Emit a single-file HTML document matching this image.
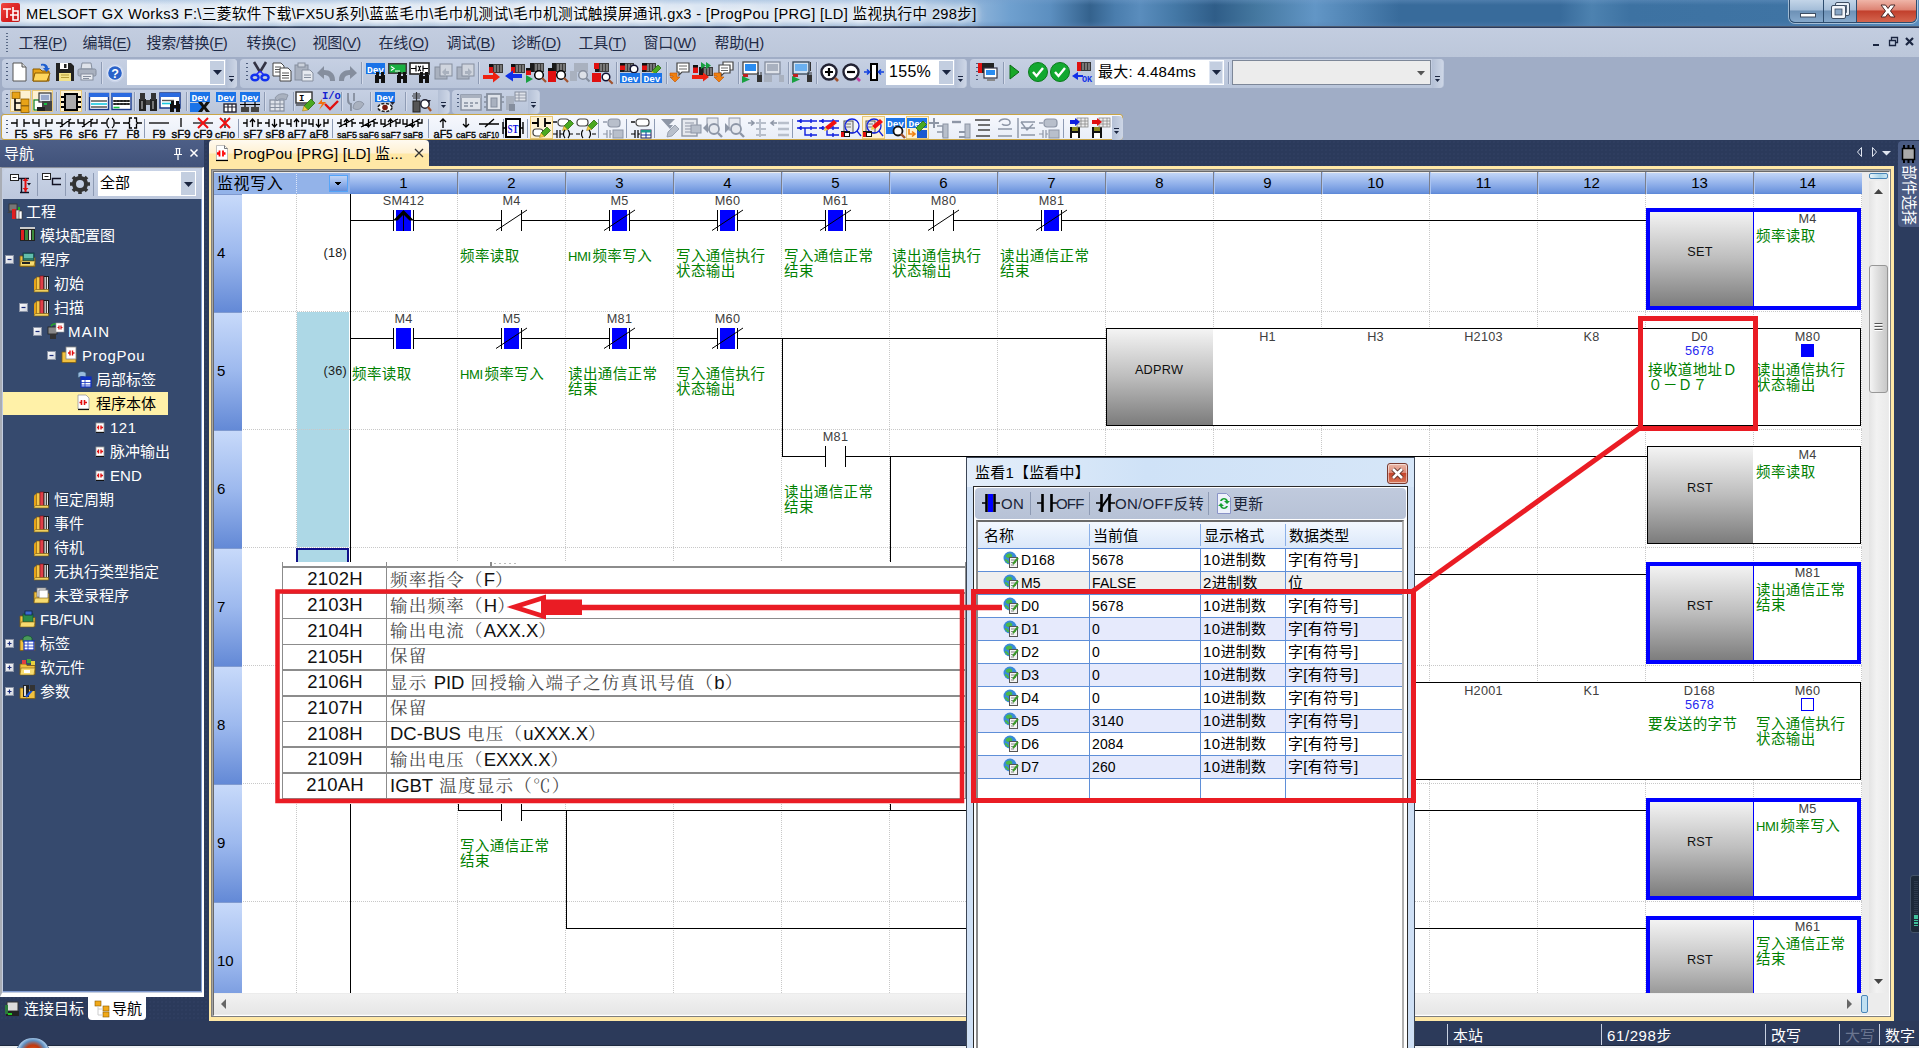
<!DOCTYPE html>
<html lang="zh-CN"><head><meta charset="utf-8"><title>MELSOFT GX Works3</title>
<style>
html,body{margin:0;padding:0}
body{width:1919px;height:1048px;position:relative;overflow:hidden;background:#2b3a5b radial-gradient(#31406399 .7px,transparent 1.100px) 0 0/4px 4px;font-family:"Liberation Sans","Noto Sans CJK SC",sans-serif;font-size:15px;color:#000}
.abs{position:absolute}
div,span{box-sizing:border-box}
.t{position:absolute;white-space:nowrap;line-height:1}
.mi{font-size:15px;color:#1f2b47;letter-spacing:-.3px}
.mi u{text-decoration:underline;text-underline-offset:2px}
.tbp{background:linear-gradient(#c6d0e3,#b9c5da);border-radius:4px}
.tv{font-size:15px}
.cm{font-family:"Liberation Sans","Noto Sans CJK SC",sans-serif;font-size:14.500px;fill:#008000;letter-spacing:.4px}
.ov1{font-size:18.500px;text-align:center;color:#111;letter-spacing:.2px}
.ov2{font-size:17.500px;color:#4a4a4a;font-family:"Liberation Sans","Noto Serif CJK SC",serif;letter-spacing:1.25px;font-weight:400}
.ov2 b{font-weight:normal;color:#111;font-size:18.500px;letter-spacing:0}
.st{font-size:15px}
.wt{font-size:15px;color:#000;letter-spacing:0}
.wl{font-size:14px;padding-top:.5px;letter-spacing:.1px}
.wm{letter-spacing:.35px}

</style></head>
<body>
<!-- title -->

<div id="title" class="abs" style="left:0;top:0;width:1919px;height:27px;background:
linear-gradient(180deg,rgba(120,160,205,.35) 0,rgba(255,255,255,0) 5px,rgba(255,255,255,0) 21px,rgba(90,130,180,.35) 26px),
linear-gradient(90deg,#dde8f4 0,#dbe6f3 700px,#d0dff0 860px,#b4cce6 930px,#8fb4da 975px,#6fa0cf 1010px,#5c8fc0 1050px,#34628d 1090px,#4a7dad 1115px,#5a8dbd 1140px,#4478a6 1175px,#2f5d88 1215px,#44779f 1255px,#6296c6 1315px,#4c80b0 1360px,#386b9b 1400px,#386b9b 1560px,#4d82b0 1592px,#3d72a2 1630px,#3f74a4 1790px,#5a8fbf 1919px);border-bottom:1px solid #4b5a70">
 <div class="abs" style="left:1px;top:3px;width:19px;height:19px;background:linear-gradient(135deg,#f0473f,#d81f1f 60%,#b81414);border-radius:2px;overflow:hidden">
  <svg width="19" height="19" viewBox="0 0 19 19"><path d="M2 6h8M6 6v9M9 12h3M12 4v4M12 8h5v9h-5z M12 12h5" stroke="#fff" stroke-width="1.6" fill="none"/></svg>
 </div>
 <div class="t" id="ttl" style="left:26px;top:6.500px;font-size:14.67px;color:#000;letter-spacing:.33px;text-shadow:0 0 6px #fff,0 0 10px #fff,0 0 14px #fff">MELSOFT GX Works3 F:\三菱软件下载\FX5U系列\蓝蓝毛巾\毛巾机测试\毛巾机测试触摸屏通讯.gx3 - [ProgPou [PRG] [LD] 监视执行中 298步]</div>
 <div class="abs" style="left:1789px;top:0;width:128px;height:23px;border:1px solid #2d4c6e;border-top:none;border-radius:0 0 6px 6px;overflow:hidden;box-shadow:0 0 0 1px rgba(255,255,255,.5)">
   <div class="abs" style="left:0;top:0;width:34px;height:22px;background:linear-gradient(#c3d5e8 0,#a4bdd8 45%,#6d91b6 50%,#86a9cc 100%);border-right:1px solid #2d4c6e"></div>
   <div class="abs" style="left:34px;top:0;width:33px;height:22px;background:linear-gradient(#c3d5e8 0,#a4bdd8 45%,#6d91b6 50%,#86a9cc 100%);border-right:1px solid #2d4c6e"></div>
   <div class="abs" style="left:67px;top:0;width:61px;height:22px;background:linear-gradient(#efb5a8 0,#dd8373 45%,#c23f2c 50%,#d4654e 100%)"></div>
   <svg class="abs" style="left:0;top:0" width="128" height="22" viewBox="0 0 128 22">
     <rect x="10.500" y="13.500" width="15" height="3.500" fill="#fff" stroke="#3d4d62"/>
     <rect x="45.500" y="2.500" width="14" height="13" rx="1.500" fill="#e8eef6" stroke="#3d4d62"/><rect x="48.500" y="5.500" width="8" height="7" fill="#9ab4d0" stroke="#3d4d62" stroke-width=".8"/>
     <rect x="41.500" y="5.500" width="14" height="13" rx="1.500" fill="#f2f5fa" stroke="#3d4d62"/><rect x="45" y="9" width="7" height="6" fill="#88a6c6" stroke="#3d4d62" stroke-width=".8"/>
     <path d="M91 5h4.500l2.500 3.500 2.500-3.500h4.500l-4.500 6 4.500 6h-4.500l-2.500-3.500-2.500 3.500h-4.500l4.500-6z" fill="#fff" stroke="#4a2a2a" stroke-width="1"/>
   </svg>
 </div>
</div>

<!-- menu -->
<div id="menu" class="abs" style="left:0;top:28px;width:1919px;height:29px;background:linear-gradient(#c3cde0,#bcc7da)"><div class="abs" style="left:6px;top:5px;width:2px;height:19px;background:repeating-linear-gradient(#5a6a86 0,#5a6a86 1px,transparent 1px,transparent 3px)"></div><div class="t mi" style="left:18.5px;top:7px">工程(<u>P</u>)</div><div class="t mi" style="left:82.5px;top:7px">编辑(<u>E</u>)</div><div class="t mi" style="left:146.5px;top:7px">搜索/替换(<u>F</u>)</div><div class="t mi" style="left:246.5px;top:7px">转换(<u>C</u>)</div><div class="t mi" style="left:312.5px;top:7px">视图(<u>V</u>)</div><div class="t mi" style="left:378.5px;top:7px">在线(<u>O</u>)</div><div class="t mi" style="left:446.5px;top:7px">调试(<u>B</u>)</div><div class="t mi" style="left:511.5px;top:7px">诊断(<u>D</u>)</div><div class="t mi" style="left:578.5px;top:7px">工具(<u>T</u>)</div><div class="t mi" style="left:643.5px;top:7px">窗口(<u>W</u>)</div><div class="t mi" style="left:714.5px;top:7px">帮助(<u>H</u>)</div><svg class="abs" style="left:1869px;top:6px" width="50" height="16" viewBox="0 0 50 16">
<rect x="4" y="10" width="6" height="2" fill="#1a2540"/>
<path d="M20.500 6.500h6v5h-6z M22.500 6v-2.500h6v5H27" fill="none" stroke="#1a2540" stroke-width="1.300"/>
<path d="M37 4l7 7M44 4l-7 7" stroke="#1a2540" stroke-width="2.200"/></svg></div>
<!-- toolbars -->
<div id="tbarea" class="abs" style="left:0;top:57px;width:1919px;height:83px;background:#a0adc6"></div><div class="abs tbp" style="left:2px;top:59px;width:235px;height:29px;"></div><div class="abs tbp" style="left:240px;top:59px;width:727px;height:29px;"></div><div class="abs tbp" style="left:970px;top:59px;width:474px;height:29px;"></div><div class="abs tbp" style="left:2px;top:90px;width:448px;height:24px;"></div><div class="abs tbp" style="left:452px;top:90px;width:88px;height:24px;"></div><div class="abs" style="left:1px;top:114px;width:1122px;height:26px;background:linear-gradient(#f6f8fd,#e9eef8);border:1px solid #c9a545;border-radius:3px"></div><div class="abs" style="left:226px;top:59px;width:11px;height:29px;background:linear-gradient(90deg,#b4c0d6,#cdd6e6);border-radius:0 4px 4px 0"></div><div class="abs" style="left:955px;top:59px;width:11px;height:29px;background:linear-gradient(90deg,#b4c0d6,#cdd6e6);border-radius:0 4px 4px 0"></div><div class="abs" style="left:1432px;top:59px;width:11px;height:29px;background:linear-gradient(90deg,#b4c0d6,#cdd6e6);border-radius:0 4px 4px 0"></div><div class="abs" style="left:438px;top:90px;width:11px;height:24px;background:linear-gradient(90deg,#b4c0d6,#cdd6e6);border-radius:0 4px 4px 0"></div><div class="abs" style="left:528px;top:90px;width:11px;height:24px;background:linear-gradient(90deg,#b4c0d6,#cdd6e6);border-radius:0 4px 4px 0"></div><div class="abs" style="left:1112px;top:116px;width:11px;height:24px;background:linear-gradient(90deg,#b4c0d6,#cdd6e6);border-radius:0 4px 4px 0"></div><div class="abs" style="left:10px;top:90px;width:21px;height:22px;background:#fdf1d2;border:1px solid #e8c877"></div><div class="abs" style="left:32px;top:90px;width:21px;height:22px;background:#fdf1d2;border:1px solid #e8c877"></div><div class="abs" style="left:60px;top:90px;width:22px;height:22px;background:#fdf1d2;border:1px solid #e8c877"></div><div class="abs" style="left:127px;top:60px;width:98px;height:25px;background:#fff"></div><div class="abs" style="left:210px;top:61px;width:14px;height:23px;background:#c3cee0"></div><div class="abs" style="left:886px;top:60px;width:68px;height:25px;background:#fff"></div><div class="abs" style="left:939px;top:61px;width:14px;height:23px;background:#c3cee0"></div><div class="t" style="left:889px;top:64px;font-size:16px;letter-spacing:.3px">155%</div><div class="abs" style="left:1095px;top:60px;width:129px;height:25px;background:#fff"></div><div class="abs" style="left:1209px;top:61px;width:14px;height:23px;background:#c3cee0;border:1px solid #dfe6f2"></div><div class="t" style="left:1098px;top:64px;font-size:15px;letter-spacing:.2px">最大: 4.484ms</div><div class="abs" style="left:1232px;top:60px;width:199px;height:25px;background:#ececec;border:1px solid #7d8798"></div><div class="abs" style="left:6px;top:63px;width:2px;height:20px;background:repeating-linear-gradient(#4d5d7c 0,#4d5d7c 1.500px,transparent 1.500px,transparent 4px)"></div><div class="abs" style="left:246px;top:63px;width:2px;height:20px;background:repeating-linear-gradient(#4d5d7c 0,#4d5d7c 1.500px,transparent 1.500px,transparent 4px)"></div><div class="abs" style="left:976px;top:63px;width:2px;height:20px;background:repeating-linear-gradient(#4d5d7c 0,#4d5d7c 1.500px,transparent 1.500px,transparent 4px)"></div><div class="abs" style="left:6px;top:94px;width:2px;height:16px;background:repeating-linear-gradient(#4d5d7c 0,#4d5d7c 1.500px,transparent 1.500px,transparent 4px)"></div><div class="abs" style="left:457px;top:94px;width:2px;height:16px;background:repeating-linear-gradient(#4d5d7c 0,#4d5d7c 1.500px,transparent 1.500px,transparent 4px)"></div><div class="abs" style="left:6px;top:120px;width:2px;height:16px;background:repeating-linear-gradient(#4d5d7c 0,#4d5d7c 1.500px,transparent 1.500px,transparent 4px)"></div><div class="abs" style="left:101px;top:62px;width:1px;height:22px;background:#8e9bb4;box-shadow:1px 0 0 #d5dceb"></div><div class="abs" style="left:361px;top:62px;width:1px;height:22px;background:#8e9bb4;box-shadow:1px 0 0 #d5dceb"></div><div class="abs" style="left:478px;top:62px;width:1px;height:22px;background:#8e9bb4;box-shadow:1px 0 0 #d5dceb"></div><div class="abs" style="left:616px;top:62px;width:1px;height:22px;background:#8e9bb4;box-shadow:1px 0 0 #d5dceb"></div><div class="abs" style="left:666px;top:62px;width:1px;height:22px;background:#8e9bb4;box-shadow:1px 0 0 #d5dceb"></div><div class="abs" style="left:738px;top:62px;width:1px;height:22px;background:#8e9bb4;box-shadow:1px 0 0 #d5dceb"></div><div class="abs" style="left:788px;top:62px;width:1px;height:22px;background:#8e9bb4;box-shadow:1px 0 0 #d5dceb"></div><div class="abs" style="left:816px;top:62px;width:1px;height:22px;background:#8e9bb4;box-shadow:1px 0 0 #d5dceb"></div><div class="abs" style="left:1003px;top:62px;width:1px;height:22px;background:#8e9bb4;box-shadow:1px 0 0 #d5dceb"></div><div class="abs" style="left:1228px;top:62px;width:1px;height:22px;background:#8e9bb4;box-shadow:1px 0 0 #d5dceb"></div><div class="abs" style="left:56px;top:92px;width:1px;height:19px;background:#8e9bb4;box-shadow:1px 0 0 #d5dceb"></div><div class="abs" style="left:85px;top:92px;width:1px;height:19px;background:#8e9bb4;box-shadow:1px 0 0 #d5dceb"></div><div class="abs" style="left:134px;top:92px;width:1px;height:19px;background:#8e9bb4;box-shadow:1px 0 0 #d5dceb"></div><div class="abs" style="left:186px;top:92px;width:1px;height:19px;background:#8e9bb4;box-shadow:1px 0 0 #d5dceb"></div><div class="abs" style="left:264px;top:92px;width:1px;height:19px;background:#8e9bb4;box-shadow:1px 0 0 #d5dceb"></div><div class="abs" style="left:293px;top:92px;width:1px;height:19px;background:#8e9bb4;box-shadow:1px 0 0 #d5dceb"></div><div class="abs" style="left:341px;top:92px;width:1px;height:19px;background:#8e9bb4;box-shadow:1px 0 0 #d5dceb"></div><div class="abs" style="left:370px;top:92px;width:1px;height:19px;background:#8e9bb4;box-shadow:1px 0 0 #d5dceb"></div><div class="abs" style="left:405px;top:92px;width:1px;height:19px;background:#8e9bb4;box-shadow:1px 0 0 #d5dceb"></div><svg class="abs" style="left:0;top:0" width="1919" height="142" viewBox="0 0 1919 142"><g transform="translate(10,62)"><path d="M3 1h9l4 4v14H3z" fill="#fff" stroke="#555" stroke-width="1"/><path d="M12 1v4h4" fill="#ddd" stroke="#555" stroke-width="1"/></g><g transform="translate(32,62)"><path d="M1 7h7l2 2h7v10H1z" fill="#e8a317" stroke="#8a5a00" stroke-width="1"/><path d="M3 11h15l-3 8H1z" fill="#ffd75e" stroke="#8a5a00" stroke-width="1"/><path d="M9 2c4-1 7 1 7 4h2l-3.500 4-3.500-4h2c0-2-2-3-4-2z" fill="#1f5fd0"/></g><g transform="translate(55,62)"><path d="M1 1h15l3 3v15H1z" fill="#222"/><rect x="5" y="1" width="8" height="6" fill="#fff"/><rect x="9" y="2" width="2.5" height="4" fill="#222"/><rect x="4" y="11" width="12" height="8" fill="#f2e28a"/><path d="M6 13h8M6 15.500h8" fill="none" stroke="#b59d3a" stroke-width="1"/></g><g transform="translate(77,62)"><path d="M5 1h9l1 6H4z" fill="#dfe3ea" stroke="#858e9e" stroke-width="1"/><rect x="1" y="7" width="18" height="7" fill="#a9b1bf" stroke="#858e9e" stroke-width="1" rx="1.5"/><rect x="4" y="12" width="12" height="6" fill="#e8ebf0" stroke="#858e9e" stroke-width="1"/><path d="M6 14.500h8M6 16.500h6" fill="none" stroke="#858e9e" stroke-width="1"/></g><g transform="translate(105,63)"><circle cx="10" cy="10" r="8.5" fill="#e6ecf8" stroke="#c9d3e8" stroke-width="1.5"/><circle cx="10" cy="10" r="6.8" fill="#2a62c9"/><text x="10" y="14.5" font-size="12.5" fill="#fff" text-anchor="middle" font-weight="bold" font-family="Liberation Sans,sans-serif" >?</text></g><g transform="translate(250,62)"><path d="M4 0l6 10M16 0l-6 10" fill="none" stroke="#334" stroke-width="2.6"/><path d="M10 9l-4 4M10 9l4 4" fill="none" stroke="#22f" stroke-width="1.5"/><ellipse cx="5" cy="15.5" rx="3.6" ry="2.8" fill="none" stroke="#1030f0" stroke-width="2.400"/><ellipse cx="15" cy="15.5" rx="3.6" ry="2.800" fill="none" stroke="#1030f0" stroke-width="2.400"/></g><g transform="translate(272,62)"><path d="M1 1h8l3 3v10H1z" fill="#fff" stroke="#444" stroke-width="1"/><path d="M3 5h6M3 7.500h6M3 10h6" fill="none" stroke="#555" stroke-width="1"/><path d="M8 6h8l3 3v10H8z" fill="#fff" stroke="#444" stroke-width="1"/><path d="M10 11h7M10 13.500h7M10 16h7" fill="none" stroke="#555" stroke-width="1"/></g><g transform="translate(294,62)"><rect x="1" y="3" width="13" height="15" fill="#a9b1bf" stroke="#858e9e" stroke-width="1"/><rect x="4" y="1" width="7" height="4" fill="#ccd2dc" stroke="#858e9e" stroke-width="1"/><path d="M8 8h8l3 3v8H8z" fill="#e6e9ef" stroke="#858e9e" stroke-width="1"/><path d="M10 13h7M10 15.500h7" fill="none" stroke="#858e9e" stroke-width="1"/></g><g transform="translate(316,62)"><path d="M1 11l7-7v4c6 0 11 3 11 10v1h-5c0-4-2-6-6-6v4z" fill="#858e9e"/></g><g transform="translate(338,62)"><path d="M19 11l-7-7v4c-6 0-11 3-11 10v1h5c0-4 2-6 6-6v4z" fill="#858e9e"/></g><g transform="translate(366,63)"><rect x="0" y="0" width="19" height="11" fill="#1a73e8"/><text x="9.5" y="9.8" font-size="9.5" fill="#fff" text-anchor="middle" font-weight="bold" font-family="Liberation Mono,sans-serif" >Dev</text><rect x="9" y="12" width="4" height="8" fill="#111"/><rect x="15" y="12" width="4" height="8" fill="#111"/><rect x="10" y="9" width="3" height="4" fill="#111"/><rect x="15" y="9" width="3" height="4" fill="#111"/><rect x="12" y="13" width="4" height="3" fill="#111"/></g><g transform="translate(388,63)"><rect x="0" y="0" width="19" height="11" fill="#3d3d3d"/><rect x="1.5" y="1.5" width="16" height="8" fill="#18b040"/><path d="M3 3.500l3 2-3 2M7 8h5" fill="none" stroke="#fff" stroke-width="1.2"/><rect x="9" y="12" width="4" height="8" fill="#111"/><rect x="15" y="12" width="4" height="8" fill="#111"/><rect x="10" y="9" width="3" height="4" fill="#111"/><rect x="15" y="9" width="3" height="4" fill="#111"/><rect x="12" y="13" width="4" height="3" fill="#111"/></g><g transform="translate(410,63)"><rect x="0" y="0" width="19" height="11" fill="#fff" stroke="#222" stroke-width="1.6"/><path d="M1 5.500h5M13 5.500h5M6 2.500v6M13 2.500v6M8 3c2 1 2 4 0 5M11 3c-2 1-2 4 0 5" fill="none" stroke="#000" stroke-width="1.2"/><rect x="9" y="12" width="4" height="8" fill="#111"/><rect x="15" y="12" width="4" height="8" fill="#111"/><rect x="10" y="9" width="3" height="4" fill="#111"/><rect x="15" y="9" width="3" height="4" fill="#111"/><rect x="12" y="13" width="4" height="3" fill="#111"/></g><g transform="translate(433,62)"><rect x="2" y="5" width="12" height="12" fill="#a9b1bf" stroke="#858e9e" stroke-width="1"/><rect x="7" y="2" width="12" height="12" fill="#d0d5de" stroke="#858e9e" stroke-width="1"/><path d="M9 10l4-4v3h3v3h-3v3z" fill="#a9b1be"/></g><g transform="translate(455,62)"><rect x="2" y="5" width="12" height="12" fill="#a9b1bf" stroke="#858e9e" stroke-width="1"/><rect x="7" y="2" width="12" height="12" fill="#d0d5de" stroke="#858e9e" stroke-width="1"/><path d="M17 10l-4-4v3h-3v3h3v3z" fill="#a9b1be"/></g><g transform="translate(483,63)"><rect x="6" y="1" width="14" height="9" fill="#3a3a3a"/><rect x="6" y="1" width="4" height="9" fill="#e01010"/><rect x="11" y="2" width="2" height="7" fill="#777"/><rect x="14" y="2" width="2" height="7" fill="#777"/><rect x="17" y="2" width="2" height="7" fill="#777"/><rect x="6" y="1" width="4" height="3" fill="#111"/><path d="M0 12h10v-3.500l7 5.500-7 5.500V16H0z" fill="#ee2211"/></g><g transform="translate(505,63)"><rect x="6" y="1" width="14" height="9" fill="#3a3a3a"/><rect x="6" y="1" width="4" height="9" fill="#e01010"/><rect x="11" y="2" width="2" height="7" fill="#777"/><rect x="14" y="2" width="2" height="7" fill="#777"/><rect x="17" y="2" width="2" height="7" fill="#777"/><rect x="6" y="1" width="4" height="3" fill="#111"/><path d="M17 11H8v-3.500L0 13l8 5.500V15h9z" fill="#1030e8"/></g><g transform="translate(526,63)"><rect x="4" y="0" width="14" height="9" fill="#3a3a3a"/><rect x="4" y="0" width="4" height="9" fill="#1a1a1a"/><rect x="9" y="1" width="2" height="7" fill="#777"/><rect x="12" y="1" width="2" height="7" fill="#777"/><rect x="15" y="1" width="2" height="7" fill="#777"/><rect x="0" y="7" width="5" height="5" fill="#e01010"/><rect x="0" y="5" width="5" height="2.5" fill="#111"/><path d="M0 12l7 4-7 4z" fill="#18a040"/><circle cx="13" cy="12" r="4.3" fill="#fff" stroke="#000" stroke-width="1.5"/><path d="M16.01 15.01l4 4" fill="none" stroke="#a0522d" stroke-width="2.2"/></g><g transform="translate(548,63)"><rect x="4" y="0" width="14" height="9" fill="#3a3a3a"/><rect x="4" y="0" width="4" height="9" fill="#1a1a1a"/><rect x="9" y="1" width="2" height="7" fill="#777"/><rect x="12" y="1" width="2" height="7" fill="#777"/><rect x="15" y="1" width="2" height="7" fill="#777"/><rect x="0" y="8" width="8" height="11" fill="#e01010"/><rect x="0" y="5" width="6" height="3" fill="#111"/><circle cx="13" cy="12" r="4.3" fill="#fff" stroke="#000" stroke-width="1.5"/><path d="M16.01 15.01l4 4" fill="none" stroke="#a0522d" stroke-width="2.2"/></g><g transform="translate(570,63)"><rect x="4" y="0" width="14" height="9" fill="#a9b1bf"/><path d="M0 8h7v10H0z" fill="#a9b1bf"/><circle cx="13" cy="12" r="4.3" fill="#dde1e8" stroke="#858e9e" stroke-width="1.5"/><path d="M16 15l3.500 3.500" fill="none" stroke="#858e9e" stroke-width="2"/></g><g transform="translate(592,63)"><rect x="3" y="0" width="14" height="9" fill="#3a3a3a"/><rect x="3" y="0" width="4" height="9" fill="#1a1a1a"/><rect x="8" y="1" width="2" height="7" fill="#777"/><rect x="11" y="1" width="2" height="7" fill="#777"/><rect x="14" y="1" width="2" height="7" fill="#777"/><rect x="2" y="0" width="5" height="6" fill="#e01010"/><rect x="0" y="10" width="9" height="9" fill="#e01010"/><circle cx="14" cy="14" r="3.8" fill="#fff" stroke="#113" stroke-width="1.5"/><path d="M16.66 16.66l4 4" fill="none" stroke="#a0522d" stroke-width="2.2"/></g><g transform="translate(620,63)"><rect x="0" y="0" width="14" height="9" fill="#3a3a3a"/><rect x="0" y="0" width="4" height="9" fill="#1a1a1a"/><rect x="5" y="1" width="2" height="7" fill="#777"/><rect x="8" y="1" width="2" height="7" fill="#777"/><rect x="11" y="1" width="2" height="7" fill="#777"/><rect x="0" y="0" width="5" height="7" fill="#e01010"/><rect x="0" y="0" width="5" height="2.5" fill="#111"/><circle cx="14" cy="6" r="3.8" fill="#fff" stroke="#113" stroke-width="1.5"/><rect x="0" y="10" width="20" height="10" fill="#1a73e8"/><text x="10" y="18.8" font-size="9.5" fill="#fff" text-anchor="middle" font-weight="bold" font-family="Liberation Mono,sans-serif" >Dev</text></g><g transform="translate(642,63)"><rect x="0" y="0" width="14" height="9" fill="#3a3a3a"/><rect x="0" y="0" width="4" height="9" fill="#1a1a1a"/><rect x="5" y="1" width="2" height="7" fill="#777"/><rect x="8" y="1" width="2" height="7" fill="#777"/><rect x="11" y="1" width="2" height="7" fill="#777"/><rect x="0" y="0" width="5" height="7" fill="#e01010"/><rect x="0" y="0" width="5" height="2.5" fill="#111"/><path d="M10 8l6-6 3 3-6 6z" fill="#4aa820" stroke="#2a6a10" stroke-width="0.8"/><path d="M10 8l-1.500 4.500L13 11z" fill="#f0d040"/><rect x="0" y="10" width="20" height="10" fill="#1a73e8"/><text x="10" y="18.8" font-size="9.5" fill="#fff" text-anchor="middle" font-weight="bold" font-family="Liberation Mono,sans-serif" >Dev</text></g><g transform="translate(670,62)"><path d="M7 1h12v9h-7l-3 3v-3H7z" fill="#fff" stroke="#444" stroke-width="1.2"/><path d="M9 4h8M9 7h8" fill="none" stroke="#666" stroke-width="1"/><path d="M0 11h7v4h3l-5 5-5-5h3v-1H0z" fill="#f08010" stroke="#c05000" stroke-width="0.6"/></g><g transform="translate(692,62)"><rect x="1" y="5" width="5" height="6" fill="#e01010"/><rect x="1" y="3" width="5" height="2.5" fill="#111"/><rect x="7" y="5" width="14" height="9" fill="#3a3a3a"/><rect x="7" y="5" width="4" height="9" fill="#1a1a1a"/><rect x="12" y="6" width="2" height="7" fill="#777"/><rect x="15" y="6" width="2" height="7" fill="#777"/><rect x="18" y="6" width="2" height="7" fill="#777"/><path d="M9 0l5 3.500-5 3.500zM14 0l5 3.500-5 3.500z" fill="#18a040"/><path d="M0 13h11v-2.500l6 4.500-6 4.500V17H0z" fill="#ee2211"/></g><g transform="translate(714,62)"><path d="M9 0h10v8h-6l-2 2V8H9z" fill="#fff" stroke="#444" stroke-width="1.2"/><path d="M5 3h11v8H10l-3 3v-3H5z" fill="#fff" stroke="#444" stroke-width="1.2"/><path d="M7 6h7M7 8.500h7" fill="none" stroke="#666" stroke-width="1"/><path d="M0 11h7v4h3l-5 5-5-5h3v-1H0z" fill="#f08010" stroke="#c05000" stroke-width="0.6"/></g><g transform="translate(742,62)"><rect x="1" y="0" width="15" height="12" fill="#fff" stroke="#444" stroke-width="1.3"/><rect x="3" y="2" width="11" height="7" fill="#2a8cf0"/><rect x="1" y="12" width="5" height="3" fill="#c02020"/><path d="M0 14l8 3.500-8 3.500z" fill="#18a040"/><rect x="15" y="13" width="5" height="7" fill="#333"/><path d="M16 13v-3M19 13v-3" fill="none" stroke="#333" stroke-width="1"/></g><g transform="translate(764,62)"><rect x="1" y="0" width="15" height="12" fill="#dfe3ea" stroke="#858e9e" stroke-width="1.3"/><rect x="3" y="2" width="11" height="7" fill="#a9b1bf"/><rect x="0" y="13" width="8" height="7" fill="#a9b1bf"/><rect x="15" y="13" width="5" height="7" fill="#a9b1bf"/></g><g transform="translate(792,62)"><rect x="1" y="0" width="16" height="12" fill="#cfe0f0" stroke="#345" stroke-width="1.3"/><rect x="3" y="2" width="12" height="7" fill="#6ab0f0"/><rect x="1" y="12" width="5" height="3" fill="#c02020"/><path d="M0 14l8 3.500-8 3.500z" fill="#18a040"/><rect x="15" y="13" width="5" height="7" fill="#333"/><path d="M16 13v-3M19 13v-3M18.500 0v9" fill="none" stroke="#333" stroke-width="1"/></g><g transform="translate(820,63)"><circle cx="9" cy="9" r="7.5" fill="#fff" stroke="#223" stroke-width="2.4"/><path d="M5 9h8M9 5v8" fill="none" stroke="#000" stroke-width="2.2"/><path d="M15 15l3 3" fill="none" stroke="#a0522d" stroke-width="2.6"/></g><g transform="translate(842,63)"><circle cx="9" cy="9" r="7.5" fill="#fff" stroke="#223" stroke-width="2.4"/><path d="M5 9h8" fill="none" stroke="#000" stroke-width="2.2"/><path d="M15 15l3 3" fill="none" stroke="#c040a0" stroke-width="2.6"/></g><g transform="translate(864,62)"><rect x="7" y="2" width="6" height="16" fill="#fff" stroke="#000" stroke-width="2"/><path d="M0 10h5M3 7.500l2.500 2.500-2.500 2.500M20 10h-5M17 7.500l-2.500 2.500 2.500 2.500" fill="none" stroke="#1040e0" stroke-width="1.6"/></g><g transform="translate(978,63)"><rect x="0" y="0" width="16" height="10" fill="#222"/><rect x="0" y="0" width="4" height="10" fill="#e01010"/><rect x="6" y="5" width="13" height="10" fill="#fff" stroke="#334" stroke-width="1.2"/><rect x="8" y="7" width="9" height="5" fill="#2a8cf0"/><rect x="9" y="16" width="8" height="2" fill="#888"/></g><g transform="translate(1010,65)"><path d="M0 0l9 7-9 7z" fill="#18a828" stroke="#0a6a14" stroke-width="1"/></g><g transform="translate(1028,62)"><circle cx="10" cy="10" r="9.5" fill="#12a830" stroke="#0a7a1c" stroke-width="1"/><path d="M5 10l3.500 4L15 6" fill="none" stroke="#fff" stroke-width="2.4"/></g><g transform="translate(1050,62)"><circle cx="10" cy="10" r="9.5" fill="#12a830" stroke="#0a7a1c" stroke-width="1"/><path d="M5 10l3.500 4L15 6" fill="none" stroke="#fff" stroke-width="2.4"/></g><g transform="translate(1072,62)"><rect x="5" y="0" width="14" height="9" fill="#3a3a3a"/><rect x="5" y="0" width="4" height="9" fill="#1a1a1a"/><rect x="10" y="1" width="2" height="7" fill="#777"/><rect x="13" y="1" width="2" height="7" fill="#777"/><rect x="16" y="1" width="2" height="7" fill="#777"/><rect x="5" y="0" width="4" height="9" fill="#e01010"/><path d="M11 13H6v-3L0 14l6 4v-3h5z" fill="#1030e8"/><text x="10" y="20" font-size="8.5" fill="#1030e8" text-anchor="start" font-weight="bold" font-family="Liberation Mono,sans-serif" >OK</text></g><g transform="translate(11,92)"><path d="M4 5v13h6M4 11h6" fill="none" stroke="#000" stroke-width="1.6"/><rect x="1" y="0" width="8" height="6.4" fill="#e8a317" stroke="#8a5a00" stroke-width="0.8"/><rect x="10" y="7" width="8" height="6.4" fill="#e8a317" stroke="#8a5a00" stroke-width="0.8"/><rect x="10" y="14" width="8" height="6.4" fill="#e8a317" stroke="#8a5a00" stroke-width="0.8"/></g><g transform="translate(33,92)"><rect x="1" y="8" width="12" height="10" fill="#fff" stroke="#0a8020" stroke-width="1.2"/><rect x="6" y="1" width="12" height="9" fill="#dfe6f0" stroke="#333" stroke-width="1.2"/><rect x="8" y="3" width="8" height="5" fill="#9ac"/><rect x="9" y="9" width="10" height="10" fill="#444"/><rect x="11" y="11" width="3" height="2" fill="#18c040"/><rect x="4" y="15" width="8" height="4" fill="#222"/></g><g transform="translate(61,92)"><rect x="4" y="2" width="12" height="16" fill="#aaa" stroke="#000" stroke-width="2"/><path d="M0 5h4M0 10h4M0 15h4M16 5h4M16 10h4M16 15h4" fill="none" stroke="#000" stroke-width="2"/></g><g transform="translate(89,93)"><rect x="0.5" y="0.5" width="19" height="16" fill="#fff" stroke="#1a3a8a" stroke-width="1.4"/><rect x="0" y="0" width="20" height="4" fill="#2a6ae0"/><path d="M2 8h16M2 14h16" fill="none" stroke="#555" stroke-width="1.4"/><path d="M2 11h16" fill="none" stroke="#18c8e0" stroke-width="1.6"/></g><g transform="translate(111.5,93)"><rect x="0.5" y="0.5" width="19" height="16" fill="#fff" stroke="#1a3a8a" stroke-width="1.4"/><rect x="0" y="0" width="20" height="4" fill="#2a6ae0"/><path d="M2 8h16M2 11h16" fill="none" stroke="#333" stroke-width="1.8"/><path d="M2 8h16M2 11h16" fill="none" stroke="#fff" stroke-width="0.1"/><path d="M2 8h16M2 11h16" stroke="#222" stroke-width="2" stroke-dasharray="2 1.500" fill="none"/><path d="M2 14.500h6" fill="none" stroke="#18c040" stroke-width="1.6"/></g><g transform="translate(138,92)"><rect x="1" y="7" width="7" height="12" fill="#222"/><rect x="12" y="7" width="7" height="12" fill="#222"/><rect x="2" y="1" width="5" height="7" fill="#333"/><rect x="13" y="1" width="5" height="7" fill="#333"/><rect x="8" y="8" width="4" height="5" fill="#444"/><rect x="3" y="9" width="2" height="8" fill="#777"/><rect x="14" y="9" width="2" height="8" fill="#777"/></g><g transform="translate(160,93)"><rect x="0" y="0" width="20" height="15" fill="#fff" stroke="#1a3a8a" stroke-width="1.5"/><rect x="0" y="0" width="20" height="4" fill="#2a6ae0"/><path d="M2 7.500h12" fill="none" stroke="#555" stroke-width="1.4"/><path d="M2 10.500h9" fill="none" stroke="#18c8e0" stroke-width="1.6"/><rect x="10" y="11" width="4" height="8" fill="#111"/><rect x="16" y="11" width="4" height="8" fill="#111"/><rect x="11" y="8" width="3" height="4" fill="#111"/><rect x="16" y="8" width="3" height="4" fill="#111"/><rect x="13" y="12" width="4" height="3" fill="#111"/></g><g transform="translate(190,92)"><rect x="0" y="0" width="20" height="10" fill="#1a73e8"/><text x="10" y="8.8" font-size="9.5" fill="#fff" text-anchor="middle" font-weight="bold" font-family="Liberation Mono,sans-serif" >Dev</text><rect x="0" y="11" width="12" height="9" fill="#1a73e8"/><path d="M8 10l4 5-4 5h4l2-3 2 3h4l-4-5 4-5h-4l-2 3-2-3z" fill="#111"/></g><g transform="translate(216,92)"><rect x="0" y="0" width="20" height="10" fill="#1a73e8"/><text x="10" y="8.8" font-size="9.5" fill="#fff" text-anchor="middle" font-weight="bold" font-family="Liberation Mono,sans-serif" >Dev</text><rect x="8" y="12" width="12" height="8" fill="#fff" stroke="#223" stroke-width="1.4"/><path d="M8 15h12M12 12v8M16 12v8" fill="none" stroke="#223" stroke-width="1.2"/></g><g transform="translate(240,92)"><rect x="0" y="0" width="20" height="10" fill="#1a73e8"/><text x="10" y="8.8" font-size="9.5" fill="#fff" text-anchor="middle" font-weight="bold" font-family="Liberation Mono,sans-serif" >Dev</text><path d="M0 12.500h20M5 10v6M15 10v6" fill="none" stroke="#000" stroke-width="1.2"/><rect x="1" y="15" width="8" height="5" fill="#444"/><rect x="11" y="15" width="8" height="5" fill="#444"/></g><g transform="translate(269,92)"><rect x="1" y="8" width="14" height="11" fill="#dfe3ea" stroke="#858e9e" stroke-width="1.2"/><path d="M1 12h14M1 15.500h14M6 8v11M11 8v11" fill="none" stroke="#858e9e" stroke-width="1"/><path d="M6 6c3-5 9-5 13-3l-2 5c-3-2-6-2-9 1z" fill="#a9b1bf" stroke="#858e9e" stroke-width="0.8"/></g><g transform="translate(296,92)"><rect x="0" y="0" width="16" height="11" fill="#fff" stroke="#333" stroke-width="1.4"/><text x="3" y="9" font-size="9" fill="#000" text-anchor="start" font-weight="bold" font-family="Liberation Mono,sans-serif" >I</text><path d="M0 13h10" fill="none" stroke="#333" stroke-width="1.2"/><path d="M8 14l7-7 4 4-7 7z" fill="#4aa820" stroke="#2a6a10" stroke-width="0.8"/><path d="M8 14l-1.500 5L12 18z" fill="#f0d040" stroke="#a08020" stroke-width="0.6"/></g><g transform="translate(318,91)"><text x="4" y="8" font-size="10.5" fill="#1020d0" text-anchor="start" font-weight="bold" font-family="Liberation Mono,sans-serif" >I/o</text><path d="M4 8l-4 5h4l-3 6 7-8H4z" fill="#f07010"/><path d="M7 13l5 5 8-8" fill="none" stroke="#e01010" stroke-width="2.4"/></g><g transform="translate(345,92)"><path d="M3 1v8c0 2 2 3 3 3v7M9 1v8" fill="#858e9e" stroke="#858e9e" stroke-width="1.8"/><path d="M9 12c3-4 8-3 10 0l-3 4c-2 2-6 2-8 0z" fill="#a9b1bf" stroke="#858e9e" stroke-width="0.8"/></g><g transform="translate(375,92)"><rect x="0" y="0" width="20" height="10" fill="#1a73e8"/><text x="10" y="8.8" font-size="9.5" fill="#fff" text-anchor="middle" font-weight="bold" font-family="Liberation Mono,sans-serif" >Dev</text><path d="M15 10h5l-2.500 3z" fill="#223"/><ellipse cx="10" cy="15.5" rx="7" ry="4" fill="#fff" stroke="#222" stroke-width="1.600" stroke-dasharray="3 1.500"/><circle cx="10" cy="15.5" r="2.8" fill="#7a1a10"/></g><g transform="translate(411,92)"><rect x="2" y="9" width="7" height="11" fill="#555" stroke="#222" stroke-width="1"/><path d="M5.500 0v9M1 4h9M2 2h7M2 6h7" fill="none" stroke="#333" stroke-width="1.2"/><circle cx="14" cy="12" r="4.2" fill="#fff" stroke="#223" stroke-width="1.5"/><path d="M17 15l3 4" fill="none" stroke="#a0522d" stroke-width="2.2"/><path d="M15 8h5l-2.500 3z" fill="#223"/></g><g transform="translate(461,92)"><rect x="0" y="3" width="20" height="15" fill="#dfe3ea" stroke="#858e9e" stroke-width="1.4"/><rect x="0" y="3" width="20" height="3" fill="#a9b1bf"/><path d="M3 11h4M9 11h3M14 11h3M3 14h4M9 14h3" fill="none" stroke="#858e9e" stroke-width="1.6"/></g><g transform="translate(484,92)"><rect x="3" y="2" width="14" height="16" fill="#dfe3ea" stroke="#858e9e" stroke-width="1.8"/><rect x="7" y="6" width="6" height="9" fill="#a9b1bf" stroke="#858e9e" stroke-width="1"/><path d="M0 5h3M0 10h3M0 15h3M17 5h3M17 10h3" fill="none" stroke="#858e9e" stroke-width="1.6"/></g><g transform="translate(506,92)"><rect x="0" y="4" width="8" height="14" fill="#a9b1bf"/><rect x="9" y="0" width="11" height="9" fill="#dfe3ea" stroke="#858e9e" stroke-width="1"/><path d="M9 3h11M9 6h11M13 0v9" fill="none" stroke="#858e9e" stroke-width="0.8"/><rect x="3" y="12" width="6" height="7" fill="#858e9e"/></g><path d="M213 70h9l-4.500 5z" fill="#1a2540"/><path d="M942 70h9l-4.500 5z" fill="#1a2540"/><path d="M1212 70h9l-4.500 5z" fill="#1a2540"/><path d="M1417 71h8l-4 4.500z" fill="#555"/><g transform="translate(229,76)"><path d="M0 0.500h5" fill="none" stroke="#1a2540" stroke-width="1"/><path d="M0 3h5l-2.500 3z" fill="#1a2540"/></g><g transform="translate(958,76)"><path d="M0 0.500h5" fill="none" stroke="#1a2540" stroke-width="1"/><path d="M0 3h5l-2.500 3z" fill="#1a2540"/></g><g transform="translate(1435,76)"><path d="M0 0.500h5" fill="none" stroke="#1a2540" stroke-width="1"/><path d="M0 3h5l-2.500 3z" fill="#1a2540"/></g><g transform="translate(441,102)"><path d="M0 0.500h5" fill="none" stroke="#1a2540" stroke-width="1"/><path d="M0 3h5l-2.500 3z" fill="#1a2540"/></g><g transform="translate(531,102)"><path d="M0 0.500h5" fill="none" stroke="#1a2540" stroke-width="1"/><path d="M0 3h5l-2.500 3z" fill="#1a2540"/></g><g transform="translate(1114,128)"><path d="M0 0.500h5" fill="none" stroke="#1a2540" stroke-width="1"/><path d="M0 3h5l-2.500 3z" fill="#1a2540"/></g></svg>
<!-- tb3 -->
<svg class="abs" style="left:0;top:0" width="1130" height="142" viewBox="0 0 1130 142"><g transform="translate(11,118)"><path d="M0 5h6M6 1v8M13 1v8M13 5h6" fill="none" stroke="#000" stroke-width="1.3"/><text x="10" y="19.5" font-size="10" fill="#000" text-anchor="middle" font-weight="normal" font-family="Liberation Sans,sans-serif" stroke="#000" stroke-width=".35" textLength="13" lengthAdjust="spacingAndGlyphs">F5</text></g><g transform="translate(33,118)"><path d="M0 1v4h6M6 1v8M13 1v8M13 5h6v-4" fill="none" stroke="#000" stroke-width="1.3"/><text x="10" y="19.5" font-size="10" fill="#000" text-anchor="middle" font-weight="normal" font-family="Liberation Sans,sans-serif" stroke="#000" stroke-width=".35" textLength="19" lengthAdjust="spacingAndGlyphs">sF5</text></g><g transform="translate(56,118)"><path d="M0 5h6M6 1v8M13 1v8M13 5h6M4 9l11-8" fill="none" stroke="#000" stroke-width="1.3"/><text x="10" y="19.5" font-size="10" fill="#000" text-anchor="middle" font-weight="normal" font-family="Liberation Sans,sans-serif" stroke="#000" stroke-width=".35" textLength="13" lengthAdjust="spacingAndGlyphs">F6</text></g><g transform="translate(78,118)"><path d="M0 1v4h6M6 1v8M13 1v8M13 5h6v-4M4 9l11-8" fill="none" stroke="#000" stroke-width="1.3"/><text x="10" y="19.5" font-size="10" fill="#000" text-anchor="middle" font-weight="normal" font-family="Liberation Sans,sans-serif" stroke="#000" stroke-width=".35" textLength="19" lengthAdjust="spacingAndGlyphs">sF6</text></g><g transform="translate(101,118)"><path d="M0 5h5M14 5h5M8 0c-3 2-3 8 0 10M11 0c3 2 3 8 0 10" fill="none" stroke="#000" stroke-width="1.3"/><text x="10" y="19.5" font-size="10" fill="#000" text-anchor="middle" font-weight="normal" font-family="Liberation Sans,sans-serif" stroke="#000" stroke-width=".35" textLength="13" lengthAdjust="spacingAndGlyphs">F7</text></g><g transform="translate(123,118)"><path d="M0 5h5M14 5h5M9 0h-2.500v4l-1.500 1 1.500 1v4h2.500M11 0h2.500v4l1.500 1-1.500 1v4H11" fill="none" stroke="#000" stroke-width="1.3"/><text x="10" y="19.5" font-size="10" fill="#000" text-anchor="middle" font-weight="normal" font-family="Liberation Sans,sans-serif" stroke="#000" stroke-width=".35" textLength="13" lengthAdjust="spacingAndGlyphs">F8</text></g><g transform="translate(149,118)"><path d="M0 5h20" fill="none" stroke="#000" stroke-width="1.3"/><text x="10" y="19.5" font-size="10" fill="#000" text-anchor="middle" font-weight="normal" font-family="Liberation Sans,sans-serif" stroke="#000" stroke-width=".35" textLength="13" lengthAdjust="spacingAndGlyphs">F9</text></g><g transform="translate(171,118)"><path d="M10 0v9" fill="none" stroke="#000" stroke-width="1.3"/><text x="10" y="19.5" font-size="10" fill="#000" text-anchor="middle" font-weight="normal" font-family="Liberation Sans,sans-serif" stroke="#000" stroke-width=".35" textLength="19" lengthAdjust="spacingAndGlyphs">sF9</text></g><g transform="translate(193,118)"><path d="M0 5h20" fill="none" stroke="#000" stroke-width="1.2"/><path d="M5 0l10 10M15 0l-10 10" fill="none" stroke="#f01010" stroke-width="2"/><text x="10" y="19.5" font-size="10" fill="#000" text-anchor="middle" font-weight="normal" font-family="Liberation Sans,sans-serif" stroke="#000" stroke-width=".35" textLength="19" lengthAdjust="spacingAndGlyphs">cF9</text></g><g transform="translate(215,118)"><path d="M10 0v10" fill="none" stroke="#000" stroke-width="1.2"/><path d="M5 0l10 10M15 0l-10 10" fill="none" stroke="#f01010" stroke-width="2"/><text x="10" y="19.5" font-size="9.5" fill="#000" text-anchor="middle" font-weight="normal" font-family="Liberation Sans,sans-serif" stroke="#000" stroke-width=".35" textLength="20" lengthAdjust="spacingAndGlyphs">cFI0</text></g><g transform="translate(243,118)"><path d="M0 5h4M4 1v8M15 1v8M15 5h4M9.500 1v8M7 4l2.500-3 2.500 3" fill="none" stroke="#000" stroke-width="1.3"/><text x="10" y="19.5" font-size="10" fill="#000" text-anchor="middle" font-weight="normal" font-family="Liberation Sans,sans-serif" stroke="#000" stroke-width=".35" textLength="19" lengthAdjust="spacingAndGlyphs">sF7</text></g><g transform="translate(265,118)"><path d="M0 5h4M4 1v8M15 1v8M15 5h4M9.500 1v8M7 6l2.500 3 2.500-3" fill="none" stroke="#000" stroke-width="1.3"/><text x="10" y="19.5" font-size="10" fill="#000" text-anchor="middle" font-weight="normal" font-family="Liberation Sans,sans-serif" stroke="#000" stroke-width=".35" textLength="19" lengthAdjust="spacingAndGlyphs">sF8</text></g><g transform="translate(287,118)"><path d="M0 1v5h4M4 1v8M15 1v8M15 1v0M9.500 1v8M7 4l2.500-3 2.500 3M15 5h4v-4" fill="none" stroke="#000" stroke-width="1.3"/><text x="10" y="19.5" font-size="10" fill="#000" text-anchor="middle" font-weight="normal" font-family="Liberation Sans,sans-serif" stroke="#000" stroke-width=".35" textLength="19" lengthAdjust="spacingAndGlyphs">aF7</text></g><g transform="translate(309,118)"><path d="M0 1v5h4M4 1v8M15 1v8M9.500 1v8M7 6l2.500 3 2.500-3M15 5h4v-4" fill="none" stroke="#000" stroke-width="1.3"/><text x="10" y="19.5" font-size="10" fill="#000" text-anchor="middle" font-weight="normal" font-family="Liberation Sans,sans-serif" stroke="#000" stroke-width=".35" textLength="19" lengthAdjust="spacingAndGlyphs">aF8</text></g><g transform="translate(337,118)"><path d="M0 5h4M4 1v8M15 1v8M15 5h4M9.500 1v8M7 4l2.500-3 2.500 3M2 9l15-8" fill="none" stroke="#000" stroke-width="1.3"/><text x="10" y="19.5" font-size="9.5" fill="#000" text-anchor="middle" font-weight="normal" font-family="Liberation Sans,sans-serif" stroke="#000" stroke-width=".35" textLength="20" lengthAdjust="spacingAndGlyphs">saF5</text></g><g transform="translate(359,118)"><path d="M0 5h4M4 1v8M15 1v8M15 5h4M9.500 1v8M7 6l2.500 3 2.500-3M2 9l15-8" fill="none" stroke="#000" stroke-width="1.3"/><text x="10" y="19.5" font-size="9.5" fill="#000" text-anchor="middle" font-weight="normal" font-family="Liberation Sans,sans-serif" stroke="#000" stroke-width=".35" textLength="20" lengthAdjust="spacingAndGlyphs">saF6</text></g><g transform="translate(381,118)"><path d="M0 1v5h4M4 1v8M15 1v8M9.500 1v8M7 4l2.500-3 2.500 3M15 5h4v-4M2 9l15-8" fill="none" stroke="#000" stroke-width="1.3"/><text x="10" y="19.5" font-size="9.5" fill="#000" text-anchor="middle" font-weight="normal" font-family="Liberation Sans,sans-serif" stroke="#000" stroke-width=".35" textLength="20" lengthAdjust="spacingAndGlyphs">saF7</text></g><g transform="translate(403,118)"><path d="M0 1v5h4M4 1v8M15 1v8M9.500 1v8M7 6l2.500 3 2.500-3M15 5h4v-4M2 9l15-8" fill="none" stroke="#000" stroke-width="1.3"/><text x="10" y="19.5" font-size="9.5" fill="#000" text-anchor="middle" font-weight="normal" font-family="Liberation Sans,sans-serif" stroke="#000" stroke-width=".35" textLength="20" lengthAdjust="spacingAndGlyphs">saF8</text></g><g transform="translate(433,118)"><path d="M10 10v-9M7 4l3-3 3 3" fill="none" stroke="#000" stroke-width="1.3"/><text x="10" y="19.5" font-size="10" fill="#000" text-anchor="middle" font-weight="normal" font-family="Liberation Sans,sans-serif" stroke="#000" stroke-width=".35" textLength="19" lengthAdjust="spacingAndGlyphs">aF5</text></g><g transform="translate(456,118)"><path d="M10 0v9M7 6l3 3 3-3" fill="none" stroke="#000" stroke-width="1.3"/><text x="10" y="19.5" font-size="9.5" fill="#000" text-anchor="middle" font-weight="normal" font-family="Liberation Sans,sans-serif" stroke="#000" stroke-width=".35" textLength="20" lengthAdjust="spacingAndGlyphs">caF5</text></g><g transform="translate(479,118)"><path d="M0 6h20M6 9l9-8" fill="none" stroke="#000" stroke-width="1.3"/><text x="10" y="19.5" font-size="9.5" fill="#000" text-anchor="middle" font-weight="normal" font-family="Liberation Sans,sans-serif" stroke="#000" stroke-width=".35" textLength="20" lengthAdjust="spacingAndGlyphs">caF10</text></g><path d="M144.5 119v19" fill="none" stroke="#8e9bb4" stroke-width="1"/><path d="M238.5 119v19" fill="none" stroke="#8e9bb4" stroke-width="1"/><path d="M332.5 119v19" fill="none" stroke="#8e9bb4" stroke-width="1"/><path d="M428.5 119v19" fill="none" stroke="#8e9bb4" stroke-width="1"/><path d="M503.5 119v19" fill="none" stroke="#8e9bb4" stroke-width="1"/><path d="M527.5 119v19" fill="none" stroke="#8e9bb4" stroke-width="1"/><path d="M598.5 119v19" fill="none" stroke="#8e9bb4" stroke-width="1"/><path d="M626.5 119v19" fill="none" stroke="#8e9bb4" stroke-width="1"/><path d="M654.5 119v19" fill="none" stroke="#8e9bb4" stroke-width="1"/><path d="M792.5 119v19" fill="none" stroke="#8e9bb4" stroke-width="1"/><path d="M1063.5 119v19" fill="none" stroke="#8e9bb4" stroke-width="1"/><g transform="translate(503,118)"><path d="M0 4v12M20 4v12M0 10h3M17 10h3" fill="none" stroke="#000" stroke-width="1.4"/><rect x="3" y="1" width="14" height="18" fill="#fff" stroke="#000" stroke-width="2"/><text x="10" y="15" font-size="12.5" fill="#1010e0" text-anchor="middle" font-weight="bold" font-family="Liberation Serif,sans-serif" textLength="11" lengthAdjust="spacingAndGlyphs">ST</text></g><rect x="530.5" y="116.5" width="22" height="22" fill="#fdf1d2" stroke="#e8c877" stroke-width="1"/><rect x="862.5" y="116.5" width="22" height="22" fill="#fdf1d2" stroke="#e8c877" stroke-width="1"/><rect x="906.5" y="116.5" width="22" height="22" fill="#fdf1d2" stroke="#e8c877" stroke-width="1"/><g transform="translate(531,118)"><path d="M1 5h6M7 0v9M14 0v9M14 5h6" fill="none" stroke="#000" stroke-width="1.8"/><rect x="2" y="11" width="10" height="7" rx="3" fill="#fff" stroke="#444" stroke-width="1.2"/><path d="M10 15l6-6 3.500 3.500-6 6z" fill="#4aa820" stroke="#2a6a10" stroke-width="0.8"/><path d="M10 15l-1.500 4.500 5-1z" fill="#f0d040" stroke="#a08020" stroke-width="0.5"/></g><g transform="translate(553,118)"><path d="M0 4h4" fill="none" stroke="#000" stroke-width="1.4"/><rect x="5" y="1" width="11" height="7" rx="3" fill="#fff" stroke="#444" stroke-width="1.2"/><path d="M11 8l6-6 3.500 3.500-6 6z" fill="#4aa820" stroke="#2a6a10" stroke-width="0.8"/><path d="M11 8l-1.500 4.500 5-1z" fill="#f0d040" stroke="#a08020" stroke-width="0.5"/><path d="M0 16h4M4 12v8M7 12v8M7 16h3M17 16h3M12 12c-2 2-2 6 0 8M15 12c2 2 2 6 0 8" fill="none" stroke="#000" stroke-width="1.2"/></g><g transform="translate(576,118)"><rect x="1" y="1" width="11" height="7" rx="3" fill="#fff" stroke="#444" stroke-width="1.2"/><path d="M12 8l6-6 3.500 3.500-6 6z" fill="#4aa820" stroke="#2a6a10" stroke-width="0.8"/><path d="M12 8l-1.500 4.500 5-1z" fill="#f0d040" stroke="#a08020" stroke-width="0.5"/><path d="M0 16h4M16 16h4M7 12c-2 2-2 6 0 8M13 12c2 2 2 6 0 8" fill="none" stroke="#000" stroke-width="1.2"/></g><g transform="translate(603,118)"><path d="M0 4h4" fill="none" stroke="#8d96a6" stroke-width="1.4"/><rect x="5" y="1" width="12" height="8" rx="3" fill="#b8bfcb" stroke="#8d96a6" stroke-width="1.2"/><path d="M0 16h4M4 12v8M7 12v8M7 16h2" fill="none" stroke="#8d96a6" stroke-width="1.2"/><rect x="10" y="12" width="10" height="8" fill="#b8bfcb" stroke="#8d96a6" stroke-width="1"/></g><g transform="translate(631,118)"><path d="M0 4h4" fill="none" stroke="#000" stroke-width="1.4"/><rect x="5" y="1" width="13" height="7" rx="3" fill="#fff" stroke="#444" stroke-width="1.2"/><path d="M0 16h4M4 12v8M7 12v8M7 16h2" fill="none" stroke="#000" stroke-width="1.2"/><rect x="10" y="12" width="10" height="8" fill="#fff" stroke="#224" stroke-width="1"/><rect x="10" y="12" width="10" height="2.5" fill="#1a9a8a"/><path d="M10 17h10M15 14v6" fill="none" stroke="#1030a0" stroke-width="1"/></g><g transform="translate(660,118)"><path d="M1 1h14l-6 6h4l-3 4z" fill="#8d96a6"/><path d="M8 14l7-7 4 4-7 7-5 1z" fill="#b8bfcb" stroke="#8d96a6" stroke-width="0.8"/></g><g transform="translate(682,118)"><rect x="0" y="1" width="15" height="17" fill="#e6e9ef" stroke="#8d96a6" stroke-width="1.4"/><path d="M3 5h9M3 8h9M3 11h9M3 14h6" fill="none" stroke="#8d96a6" stroke-width="1.2"/><rect x="9" y="7" width="10" height="8" fill="#b8bfcb" stroke="#8d96a6" stroke-width="1"/></g><g transform="translate(703,118)"><rect x="4" y="0" width="11" height="12" fill="#e6e9ef" stroke="#8d96a6" stroke-width="1"/><path d="M0 10l5-5v10z" fill="#8d96a6"/><circle cx="11" cy="11" r="5" fill="#e6e9ef" stroke="#8d96a6" stroke-width="1.8"/><path d="M15 15l4 4" fill="none" stroke="#8d96a6" stroke-width="2.4"/></g><g transform="translate(725,118)"><rect x="4" y="0" width="11" height="12" fill="#e6e9ef" stroke="#8d96a6" stroke-width="1"/><path d="M0 5l5 5-5 5z" fill="#8d96a6"/><circle cx="11" cy="11" r="5" fill="#e6e9ef" stroke="#8d96a6" stroke-width="1.8"/><path d="M15 15l4 4" fill="none" stroke="#8d96a6" stroke-width="2.4"/></g><g transform="translate(748,118)"><path d="M0 5h5M3 2.500l3 2.500-3 2.500" fill="none" stroke="#8d96a6" stroke-width="1.6"/><path d="M8 5h10M8 11h10M8 17h10M12 1v18" fill="none" stroke="#b8bfcb" stroke-width="2"/></g><g transform="translate(770,118)"><path d="M7 5H1M4 2.500L1 5l3 2.500" fill="none" stroke="#8d96a6" stroke-width="1.6"/><path d="M8 5h11M8 11h11M8 17h11" fill="none" stroke="#b8bfcb" stroke-width="2.4"/></g><g transform="translate(797,118)"><path d="M0 3h20M0 10h20M8 10v7h12M4 1v4M4 8v4M14 1v4M14 8v4M14 15v4" fill="none" stroke="#1020e0" stroke-width="1.4"/><path d="M1 3l3-2v4zM1 10l3-2v4z" fill="#1020e0"/></g><g transform="translate(819,118)"><path d="M0 3h20M0 10h20M8 10v7h12M4 1v4M4 8v4M14 1v4M14 8v4M14 15v4" fill="none" stroke="#1020e0" stroke-width="1.4"/><path d="M1 3l3-2v4zM1 10l3-2v4z" fill="#1020e0"/><path d="M6 9l9-7 3 3-9 7z" fill="#f01010"/><path d="M6 9l3 3-4 1z" fill="#f0d040"/></g><g transform="translate(841,118)"><rect x="3" y="3" width="9" height="12" fill="#e8e8e8" stroke="#555" stroke-width="1"/><path d="M5 6h5M5 9h5" fill="none" stroke="#777" stroke-width="1"/><circle cx="11" cy="8" r="7" fill="none" stroke="#1020e0" stroke-width="1.3"/><path d="M16 13l4 5" fill="none" stroke="#1020e0" stroke-width="1.3"/><rect x="0" y="13" width="9" height="6" fill="#111"/><rect x="0" y="14" width="3" height="5" fill="#e01010"/><rect x="4" y="15" width="4" height="3" fill="#fff"/></g><g transform="translate(863,118)"><rect x="3" y="3" width="9" height="12" fill="#e8e8e8" stroke="#555" stroke-width="1"/><path d="M5 6h5M5 9h5" fill="none" stroke="#777" stroke-width="1"/><circle cx="11" cy="8" r="7" fill="none" stroke="#1020e0" stroke-width="1.3"/><path d="M16 13l4 5" fill="none" stroke="#1020e0" stroke-width="1.3"/><rect x="0" y="13" width="9" height="6" fill="#111"/><rect x="0" y="14" width="3" height="5" fill="#e01010"/><rect x="4" y="15" width="4" height="3" fill="#fff"/><path d="M9 8l8-7 3 3-8 7z" fill="#f01010"/><path d="M9 8l3 3-4 1z" fill="#f0d040"/></g><g transform="translate(886,118)"><rect x="0" y="0" width="19" height="10" fill="#1a73e8"/><text x="9.5" y="8.8" font-size="9.5" fill="#fff" text-anchor="middle" font-weight="bold" font-family="Liberation Mono,sans-serif" >Dev</text><rect x="0" y="10" width="8" height="6" fill="#1a73e8"/><circle cx="12" cy="13" r="4.5" fill="#fff" stroke="#111" stroke-width="1.8"/><path d="M15 16l4 4" fill="none" stroke="#a0522d" stroke-width="2.4"/></g><g transform="translate(907,118)"><rect x="0" y="0" width="20" height="10" fill="#1a73e8"/><text x="10" y="8.8" font-size="9.5" fill="#fff" text-anchor="middle" font-weight="bold" font-family="Liberation Mono,sans-serif" >Dev</text><path d="M2 11v5h6M5 13.500l3 2.500-3 2.500" fill="none" stroke="#f08010" stroke-width="1.6"/><rect x="10" y="12" width="10" height="8" fill="#1a5ad0"/><path d="M9 10l7-7 3.500 3.500-7 7z" fill="#4aa820" stroke="#2a6a10" stroke-width="0.8"/></g><g transform="translate(929,118)"><path d="M0 5h10M5 0v10" fill="none" stroke="#8d96a6" stroke-width="2"/><path d="M8 8h6v11M8 14h6" fill="none" stroke="#8d96a6" stroke-width="1.5"/><rect x="14" y="6" width="5" height="14" fill="#b8bfcb" stroke="#8d96a6" stroke-width="1"/></g><g transform="translate(951,118)"><path d="M1 4h9" fill="none" stroke="#8d96a6" stroke-width="2.4"/><path d="M8 14h6M8 19h6" fill="none" stroke="#8d96a6" stroke-width="2"/><rect x="14" y="6" width="5" height="14" fill="#b8bfcb" stroke="#8d96a6" stroke-width="1"/></g><g transform="translate(973,118)"><path d="M2 2h15M5 7h12M5 12h12M3 18h14" fill="none" stroke="#444" stroke-width="1.6"/></g><g transform="translate(996,118)"><path d="M3 4c2-4 10-4 11 0s-6 4-8 2M2 11h14M2 18h14" fill="none" stroke="#8d96a6" stroke-width="1.5"/></g><g transform="translate(1017,118)"><path d="M1 0v20M4 4h14M4 10h14M4 17h14M4 4l6 8 6-6" fill="none" stroke="#8d96a6" stroke-width="1.4"/></g><g transform="translate(1039,118)"><path d="M0 5h4" fill="none" stroke="#8d96a6" stroke-width="1.4"/><rect x="5" y="1" width="13" height="8" rx="3" fill="#b8bfcb" stroke="#8d96a6" stroke-width="1.2"/><path d="M0 16h4M4 12v8M7 12v8M7 16h2" fill="none" stroke="#8d96a6" stroke-width="1.2"/><rect x="10" y="12" width="10" height="8" fill="#b8bfcb" stroke="#8d96a6" stroke-width="1"/></g><g transform="translate(1068,118)"><rect x="2" y="9" width="10" height="11" fill="#111"/><rect x="4" y="9" width="6" height="4" fill="#8a8a20"/><rect x="4" y="15" width="6" height="5" fill="#fff"/><rect x="9" y="0" width="11" height="9" fill="#eee" stroke="#888" stroke-width="0.8"/><path d="M9 3h11M9 6h11M13 0v9M17 0v9" fill="none" stroke="#888" stroke-width="0.8"/><path d="M2 2h5v-2l5 4-5 4v-2H2z" fill="#1020e0"/></g><g transform="translate(1090,118)"><rect x="2" y="9" width="10" height="11" fill="#111"/><rect x="4" y="9" width="6" height="4" fill="#8a8a20"/><rect x="4" y="15" width="6" height="5" fill="#fff"/><rect x="9" y="0" width="11" height="9" fill="#eee" stroke="#888" stroke-width="0.8"/><path d="M9 3h11M9 6h11M13 0v9M17 0v9" fill="none" stroke="#888" stroke-width="0.8"/><path d="M2 2h5v-2l5 4-5 4v-2H2z" fill="#e01010"/></g></svg>
<!-- dock -->
<div class="abs" style="left:0;top:140px;width:1919px;height:27px;background:#2b3a5b radial-gradient(#31406399 .7px,transparent 1.100px) 0 0/4px 4px"></div><div class="abs" style="left:0;top:140px;width:204px;height:27px;background:linear-gradient(#4d5f87,#41527a)"></div><div class="t" style="left:4px;top:146px;font-size:15px;color:#fff">导航</div><svg class="abs" style="left:170px;top:145px" width="32" height="18" viewBox="0 0 32 18">
<path d="M5.500 3.500h5M6.500 3.500v6M9.500 3.500v6M4 9.500h8M8 10v5" stroke="#fff" stroke-width="1.200" fill="none"/>
<path d="M20.500 4.500l7 7M27.500 4.500l-7 7" stroke="#fff" stroke-width="1.500" fill="none"/></svg><div class="abs" style="left:209px;top:140px;width:220px;height:27px;background:linear-gradient(#fffaf0 0,#fff1d2 48%,#ffe8a6 52%,#ffe8a6 100%);border-radius:4px 4px 0 0"></div><svg class="abs" style="left:216px;top:145px" width="13" height="17" viewBox="0 0 13 17"><path d="M0.500 0.500h8l3 3v11.500h-11z" fill="#fff" stroke="#b0b0b0" stroke-width=".8"/><path d="M8.500 0.500v3h3" fill="none" stroke="#555" stroke-width=".8"/><path d="M0 15.500h12" stroke="#000" stroke-width="1.200"/><path d="M1 8.500h2.500M8 8.500h1.500" stroke="#f00" stroke-width="2.500" fill="none"/><path d="M3.500 5.500v6M7 5.500v6" stroke="#f00" stroke-width="1.800" fill="none"/></svg><div class="t" id="tabtx" style="left:233px;top:146px;font-size:15px;color:#000;letter-spacing:.15px">ProgPou [PRG] [LD] 监...</div><svg class="abs" style="left:414px;top:148px" width="10" height="10" viewBox="0 0 10 10"><path d="M1 1l8 8M9 1l-8 8" stroke="#333" stroke-width="1.300"/></svg><svg class="abs" style="left:1852px;top:146px" width="44" height="14" viewBox="0 0 44 14"><path d="M9.500 1.500v9l-4-4.500z" fill="none" stroke="#dfe5f0" stroke-width="1"/><path d="M20.500 1.500v9l4-4.500z" fill="none" stroke="#dfe5f0" stroke-width="1"/><path d="M30 5h9l-4.500 4.500z" fill="#dfe5f0"/></svg>
<!-- nav -->
<div class="abs" style="left:0;top:167px;width:204px;height:830px;background:#c3cde0;border-left:2px solid #a9adb5;border-top:1px solid #8a8f9a;border-right:2px solid #fff;border-bottom:4px solid #fff"></div><div class="abs" style="left:3px;top:199px;width:199px;height:793px;background:#364a6e;border-right:1px solid #7f9ad0;border-bottom:1px solid #7f9ad0"></div><div class="abs" style="left:3px;top:169px;width:199px;height:30px;background:linear-gradient(#c9d3e6,#bdc8dd);border-radius:4px"></div><div class="abs" style="left:98px;top:171px;width:98px;height:25px;background:#fff"></div><div class="abs" style="left:181px;top:172px;width:14px;height:23px;background:#c3cee0"></div><div class="t" style="left:100px;top:175px;font-size:15px">全部</div><svg class="abs" style="left:0;top:168px" width="205" height="32" viewBox="0 0 205 32">
<path d="M37.500 5v23M65.500 5v23M93.500 5v23" stroke="#8e9bb4"/>
<rect x="10.500" y="6.500" width="8" height="6" fill="#fff" stroke="#222"/><path d="M12.500 9.500h4" stroke="#222"/><path d="M18 10.500h11M21.500 10.500v14M20 24.500h9" stroke="#112" stroke-width="1.400" fill="none"/><path d="M25.500 11v13" stroke="#e01010" stroke-width="2"/><path d="M22.500 13l3-3 3 3zM22.500 20l3 3 3-3z" fill="#e01010"/><path d="M27 15h4l-2 2.500z" fill="#112"/>
<rect x="42.500" y="5.500" width="8" height="6" fill="#fff" stroke="#222"/><path d="M44.500 8.500h4" stroke="#222"/><path d="M61 10.500h-8.500v6h8.500" stroke="#112" stroke-width="1.400" fill="none"/>
<g transform="translate(80,16)"><circle r="6" fill="none" stroke="#333" stroke-width="4"/><g stroke="#333" stroke-width="3.600"><path d="M0-10v4M0 10v-4M-10 0h4M10 0h-4M-7-7l3 3M7 7l-3-3M-7 7l3-3M7-7l-3 3"/></g></g>
<path d="M184 14h9l-4.500 5z" fill="#1a2540"/>
</svg><div class="abs" style="left:3px;top:392px;width:165px;height:23px;background:#fff1a8"></div><div class="t tv" style="left:26px;top:204px;color:#fff;letter-spacing:0">工程</div><div class="t tv" style="left:40px;top:228px;color:#fff;letter-spacing:0">模块配置图</div><div class="t tv" style="left:40px;top:252px;color:#fff;letter-spacing:0">程序</div><div class="t tv" style="left:54px;top:276px;color:#fff;letter-spacing:0">初始</div><div class="t tv" style="left:54px;top:300px;color:#fff;letter-spacing:0">扫描</div><div class="t tv" style="left:68px;top:324px;color:#fff;letter-spacing:1.2px">MAIN</div><div class="t tv" style="left:82px;top:348px;color:#fff;letter-spacing:.7px">ProgPou</div><div class="t tv" style="left:96px;top:372px;color:#fff;letter-spacing:0">局部标签</div><div class="t tv" style="left:96px;top:396px;color:#000;letter-spacing:0">程序本体</div><div class="t tv" style="left:110px;top:420px;color:#fff;letter-spacing:.5px">121</div><div class="t tv" style="left:110px;top:444px;color:#fff;letter-spacing:0">脉冲输出</div><div class="t tv" style="left:110px;top:468px;color:#fff;letter-spacing:.1px">END</div><div class="t tv" style="left:54px;top:492px;color:#fff;letter-spacing:0">恒定周期</div><div class="t tv" style="left:54px;top:516px;color:#fff;letter-spacing:0">事件</div><div class="t tv" style="left:54px;top:540px;color:#fff;letter-spacing:0">待机</div><div class="t tv" style="left:54px;top:564px;color:#fff;letter-spacing:0">无执行类型指定</div><div class="t tv" style="left:54px;top:588px;color:#fff;letter-spacing:0">未登录程序</div><div class="t tv" style="left:40px;top:612px;color:#fff;letter-spacing:0">FB/FUN</div><div class="t tv" style="left:40px;top:636px;color:#fff;letter-spacing:0">标签</div><div class="t tv" style="left:40px;top:660px;color:#fff;letter-spacing:0">软元件</div><div class="t tv" style="left:40px;top:684px;color:#fff;letter-spacing:0">参数</div><svg class="abs" style="left:0;top:199px" width="205" height="510" viewBox="0 199 205 510"><defs><linearGradient id="exg" x1="0" y1="0" x2="1" y2="1"><stop offset="0" stop-color="#fff"/><stop offset="1" stop-color="#cfd3dc"/></linearGradient></defs><g transform="translate(7,203)"><rect x="2" y="1" width="8" height="7" fill="#777" stroke="#333" stroke-width="0.8"/><path d="M0 10l3-2h8l-2 2z" fill="#444"/><rect x="5" y="6" width="4" height="10" fill="#e02020"/><rect x="9" y="7" width="4" height="9" fill="#ddd" stroke="#333" stroke-width="0.6"/><rect x="11" y="4" width="2" height="3" fill="#2a2"/><rect x="12" y="8" width="3" height="8" fill="#fff" stroke="#333" stroke-width="0.6"/></g><g transform="translate(20,227)"><rect x="0" y="1" width="15" height="13" fill="#222"/><rect x="1" y="3" width="3" height="10" fill="#e02020"/><rect x="5" y="3" width="3" height="10" fill="#3a8a3a"/><rect x="9" y="3" width="2" height="10" fill="#ddd"/><rect x="12" y="3" width="2" height="10" fill="#3a8a3a"/><rect x="0" y="0" width="15" height="2" fill="#ccc"/></g><g transform="translate(20,251)"><path d="M0 5h6l1 1.500h8v9H0z" fill="#f0c040" stroke="#7a5a10" stroke-width="0.8"/><rect x="3" y="2" width="11" height="8" fill="#2a7a6a" stroke="#134" stroke-width="0.8"/><path d="M4 4h9M4 6h9" fill="none" stroke="#9fe" stroke-width="1"/><path d="M1 10h14l-1 5H0z" fill="#f8dc70" stroke="#7a5a10" stroke-width="0.6"/><rect x="2" y="11" width="8" height="2" fill="#222"/></g><g transform="translate(5,255)"><rect x="0.5" y="0.5" width="8" height="8" fill="url(#exg)" stroke="#8a93a6" stroke-width="1"/><path d="M2.500 4.500h4" fill="none" stroke="#1a2a7a" stroke-width="1.2"/></g><g transform="translate(34,275)"><path d="M0 6c0-2 1-3 3-3v12c-2 0-3 1-3 3z" fill="#e8a317"/><rect x="2.5" y="2" width="3.5" height="13" fill="#f4c848" stroke="#7a5a10" stroke-width="0.6"/><rect x="6" y="1" width="4" height="14" fill="#e04048" stroke="#701018" stroke-width="0.6"/><rect x="10" y="1.5" width="4.5" height="13.5" fill="#e8e8e8" stroke="#1a1a1a" stroke-width="1"/><path d="M12.300 2v12" fill="none" stroke="#1a1a1a" stroke-width="1"/><path d="M0 17c0-2 1-2.500 3-2.500h11.500v2.500z" fill="#f0d060" stroke="#7a5a10" stroke-width="0.6"/></g><g transform="translate(34,299)"><path d="M0 6c0-2 1-3 3-3v12c-2 0-3 1-3 3z" fill="#e8a317"/><rect x="2.5" y="2" width="3.5" height="13" fill="#f4c848" stroke="#7a5a10" stroke-width="0.6"/><rect x="6" y="1" width="4" height="14" fill="#e04048" stroke="#701018" stroke-width="0.6"/><rect x="10" y="1.5" width="4.5" height="13.5" fill="#e8e8e8" stroke="#1a1a1a" stroke-width="1"/><path d="M12.300 2v12" fill="none" stroke="#1a1a1a" stroke-width="1"/><path d="M0 17c0-2 1-2.500 3-2.500h11.500v2.500z" fill="#f0d060" stroke="#7a5a10" stroke-width="0.6"/></g><g transform="translate(19,303)"><rect x="0.5" y="0.5" width="8" height="8" fill="url(#exg)" stroke="#8a93a6" stroke-width="1"/><path d="M2.500 4.500h4" fill="none" stroke="#1a2a7a" stroke-width="1.2"/></g><g transform="translate(48,323)"><rect x="0" y="4" width="9" height="7" fill="#888" stroke="#222" stroke-width="0.8"/><rect x="2" y="11" width="6" height="5" fill="#333"/><path d="M3 3c2-3 6-3 8 0" fill="none" stroke="#2a2" stroke-width="1.5"/><rect x="8" y="0" width="8" height="9" fill="#fff" stroke="#999" stroke-width="0.6"/><path d="M9.500 4.500h1.500M11 2.500v4M13 2.500v4M13 4.500h1.500" fill="none" stroke="#e01010" stroke-width="1.2"/></g><g transform="translate(33,327)"><rect x="0.5" y="0.5" width="8" height="8" fill="url(#exg)" stroke="#8a93a6" stroke-width="1"/><path d="M2.500 4.500h4" fill="none" stroke="#1a2a7a" stroke-width="1.2"/></g><g transform="translate(62,347)"><path d="M0 5h6l1 1.500h7v9H0z" fill="#f0c040" stroke="#7a5a10" stroke-width="0.8"/><rect x="4" y="0" width="10" height="12" fill="#fff" stroke="#888" stroke-width="0.8"/><path d="M6 6h2M8 3.500v5M10.500 3.500v5M10.500 6h2" fill="none" stroke="#e01010" stroke-width="1.4"/></g><g transform="translate(47,351)"><rect x="0.5" y="0.5" width="8" height="8" fill="url(#exg)" stroke="#8a93a6" stroke-width="1"/><path d="M2.500 4.500h4" fill="none" stroke="#1a2a7a" stroke-width="1.2"/></g><g transform="translate(76,371)"><path d="M2 2c2-2 6-2 8 0v5c-2-2-6-2-8 0z" fill="#9bd" stroke="#357" stroke-width="0.8"/><rect x="5" y="6" width="10" height="10" fill="#fff" stroke="#1030c0" stroke-width="1.2"/><rect x="5" y="6" width="10" height="3" fill="#1030c0"/><path d="M5 11.500h10M5 14h10M9 9v7" fill="none" stroke="#1030c0" stroke-width="0.8"/></g><g transform="translate(78,395)"><path d="M0 0h8l3 3v11H0z" fill="#fff" stroke="#999" stroke-width="0.8"/><path d="M0 14.500h11" fill="none" stroke="#111" stroke-width="1.2"/><path d="M1.500 7.500h2M3.500 5v5M6.500 5v5M6.500 7.500h2.500" fill="none" stroke="#e01010" stroke-width="1.6"/></g><g transform="translate(96,421)"><rect x="0" y="2" width="8" height="9" fill="#fff" stroke="#999" stroke-width="0.8"/><path d="M0 11.500h8" fill="none" stroke="#111" stroke-width="1"/><path d="M1 6.500h1.500M2.500 4.500v4M5 4.500v4M5 6.500h2" fill="none" stroke="#e01010" stroke-width="1.4"/></g><g transform="translate(96,445)"><rect x="0" y="2" width="8" height="9" fill="#fff" stroke="#999" stroke-width="0.8"/><path d="M0 11.500h8" fill="none" stroke="#111" stroke-width="1"/><path d="M1 6.500h1.500M2.500 4.500v4M5 4.500v4M5 6.500h2" fill="none" stroke="#e01010" stroke-width="1.4"/></g><g transform="translate(96,469)"><rect x="0" y="2" width="8" height="9" fill="#fff" stroke="#999" stroke-width="0.8"/><path d="M0 11.500h8" fill="none" stroke="#111" stroke-width="1"/><path d="M1 6.500h1.500M2.500 4.500v4M5 4.500v4M5 6.500h2" fill="none" stroke="#e01010" stroke-width="1.4"/></g><g transform="translate(34,491)"><path d="M0 6c0-2 1-3 3-3v12c-2 0-3 1-3 3z" fill="#e8a317"/><rect x="2.5" y="2" width="3.5" height="13" fill="#f4c848" stroke="#7a5a10" stroke-width="0.6"/><rect x="6" y="1" width="4" height="14" fill="#e04048" stroke="#701018" stroke-width="0.6"/><rect x="10" y="1.5" width="4.5" height="13.5" fill="#e8e8e8" stroke="#1a1a1a" stroke-width="1"/><path d="M12.300 2v12" fill="none" stroke="#1a1a1a" stroke-width="1"/><path d="M0 17c0-2 1-2.500 3-2.500h11.500v2.500z" fill="#f0d060" stroke="#7a5a10" stroke-width="0.6"/></g><g transform="translate(34,515)"><path d="M0 6c0-2 1-3 3-3v12c-2 0-3 1-3 3z" fill="#e8a317"/><rect x="2.5" y="2" width="3.5" height="13" fill="#f4c848" stroke="#7a5a10" stroke-width="0.6"/><rect x="6" y="1" width="4" height="14" fill="#e04048" stroke="#701018" stroke-width="0.6"/><rect x="10" y="1.5" width="4.5" height="13.5" fill="#e8e8e8" stroke="#1a1a1a" stroke-width="1"/><path d="M12.300 2v12" fill="none" stroke="#1a1a1a" stroke-width="1"/><path d="M0 17c0-2 1-2.500 3-2.500h11.500v2.500z" fill="#f0d060" stroke="#7a5a10" stroke-width="0.6"/></g><g transform="translate(34,539)"><path d="M0 6c0-2 1-3 3-3v12c-2 0-3 1-3 3z" fill="#e8a317"/><rect x="2.5" y="2" width="3.5" height="13" fill="#f4c848" stroke="#7a5a10" stroke-width="0.6"/><rect x="6" y="1" width="4" height="14" fill="#e04048" stroke="#701018" stroke-width="0.6"/><rect x="10" y="1.5" width="4.5" height="13.5" fill="#e8e8e8" stroke="#1a1a1a" stroke-width="1"/><path d="M12.300 2v12" fill="none" stroke="#1a1a1a" stroke-width="1"/><path d="M0 17c0-2 1-2.500 3-2.500h11.500v2.500z" fill="#f0d060" stroke="#7a5a10" stroke-width="0.6"/></g><g transform="translate(34,563)"><path d="M0 6c0-2 1-3 3-3v12c-2 0-3 1-3 3z" fill="#e8a317"/><rect x="2.5" y="2" width="3.5" height="13" fill="#f4c848" stroke="#7a5a10" stroke-width="0.6"/><rect x="6" y="1" width="4" height="14" fill="#e04048" stroke="#701018" stroke-width="0.6"/><rect x="10" y="1.5" width="4.5" height="13.5" fill="#e8e8e8" stroke="#1a1a1a" stroke-width="1"/><path d="M12.300 2v12" fill="none" stroke="#1a1a1a" stroke-width="1"/><path d="M0 17c0-2 1-2.500 3-2.500h11.500v2.500z" fill="#f0d060" stroke="#7a5a10" stroke-width="0.6"/></g><g transform="translate(34,587)"><path d="M0 5h6l1 1.500h8v9H0z" fill="#f0c040" stroke="#7a5a10" stroke-width="0.8"/><rect x="3" y="1" width="9" height="9" fill="#eee" stroke="#777" stroke-width="0.8"/><rect x="5" y="3" width="9" height="9" fill="#fff" stroke="#777" stroke-width="0.8"/><path d="M1 11h14l-1 5H0z" fill="#f8dc70" stroke="#7a5a10" stroke-width="0.6"/></g><g transform="translate(20,611)"><path d="M0 5h6l1 1.500h8v9H0z" fill="#f0c040" stroke="#7a5a10" stroke-width="0.8"/><rect x="3" y="3" width="10" height="8" fill="#2a8a4a" stroke="#153" stroke-width="0.8"/><rect x="5" y="0" width="7" height="4" fill="#3a6ad0" stroke="#124" stroke-width="0.8"/><path d="M1 11h14l-1 5H0z" fill="#f8dc70" stroke="#7a5a10" stroke-width="0.6"/></g><g transform="translate(20,635)"><path d="M0 5h6l1 1.500h8v9H0z" fill="#f0c040" stroke="#7a5a10" stroke-width="0.8"/><path d="M3 3c2-3 7-3 9 0v4H3z" fill="#4a9a5a" stroke="#153" stroke-width="0.8"/><rect x="4" y="6" width="10" height="9" fill="#fff" stroke="#1030c0" stroke-width="1.2"/><path d="M4 9h10M4 12h10M8 6v9" fill="none" stroke="#1030c0" stroke-width="0.8"/></g><g transform="translate(5,639)"><rect x="0.5" y="0.5" width="8" height="8" fill="url(#exg)" stroke="#8a93a6" stroke-width="1"/><path d="M2.500 4.500h4M4.500 2.500v4" fill="none" stroke="#1a2a7a" stroke-width="1.2"/></g><g transform="translate(20,659)"><path d="M0 5h6l1 1.500h8v9H0z" fill="#f0c040" stroke="#7a5a10" stroke-width="0.8"/><rect x="2" y="1" width="4" height="4" fill="#e04040"/><rect x="7" y="0" width="4" height="4" fill="#40a040"/><rect x="11" y="2" width="4" height="4" fill="#e8d040"/><path d="M1 9h14l-1 7H0z" fill="#f8dc70" stroke="#7a5a10" stroke-width="0.6"/><rect x="4" y="11" width="6" height="3" fill="#fff"/></g><g transform="translate(5,663)"><rect x="0.5" y="0.5" width="8" height="8" fill="url(#exg)" stroke="#8a93a6" stroke-width="1"/><path d="M2.500 4.500h4M4.500 2.500v4" fill="none" stroke="#1a2a7a" stroke-width="1.2"/></g><g transform="translate(20,683)"><path d="M0 5h6l1 1.500h8v9H0z" fill="#f0c040" stroke="#7a5a10" stroke-width="0.8"/><rect x="3" y="2" width="6" height="12" fill="#222"/><rect x="4" y="3" width="2" height="10" fill="#ddd"/><path d="M6 14l8-9" fill="none" stroke="#1a50d0" stroke-width="2.2"/><rect x="10" y="2" width="5" height="6" fill="#333"/></g><g transform="translate(5,687)"><rect x="0.5" y="0.5" width="8" height="8" fill="url(#exg)" stroke="#8a93a6" stroke-width="1"/><path d="M2.500 4.500h4M4.500 2.500v4" fill="none" stroke="#1a2a7a" stroke-width="1.2"/></g></svg><div class="abs" style="left:88px;top:997px;width:58px;height:23px;background:#fff;border-radius:0 0 4px 4px"></div><div class="t" style="left:24px;top:1001px;font-size:15px;color:#fff">连接目标</div><div class="t" style="left:112px;top:1001px;font-size:15px;color:#000">导航</div><svg class="abs" style="left:4px;top:999px" width="110" height="20" viewBox="0 0 110 20">
<rect x="3" y="3" width="11" height="9" fill="#ddd" stroke="#333"/><rect x="2" y="12" width="13" height="5" fill="#222"/><rect x="4" y="14" width="4" height="2" fill="#2c2"/><path d="M1 6h3v9H1z" fill="#2a7a3a"/>
<rect x="91" y="2" width="6" height="5" fill="#f0a818" stroke="#8a5a00" stroke-width=".600"/><rect x="99" y="7" width="6" height="5" fill="#f0a818" stroke="#8a5a00" stroke-width=".600"/><rect x="99" y="13" width="6" height="5" fill="#f0a818" stroke="#8a5a00" stroke-width=".600"/><path d="M94 7v9h5M94 10h5" stroke="#ccc" fill="none"/>
</svg>
<!-- editor -->
<div class="abs" style="left:209px;top:166px;width:1685px;height:855px;background:#ffe8a6"></div><div class="abs" style="left:210.500px;top:169px;width:1680.500px;height:848px;background:#7f7f7f"></div><div class="abs" style="left:212px;top:170px;width:1678px;height:846px;background:#a4a4a4"></div><div class="abs" style="left:213px;top:171px;width:1677px;height:845px;background:#ececec;border-top:1px solid #6a6a6a;border-left:1px solid #6a6a6a;border-right:1px solid #fff;border-bottom:1px solid #fff"></div><div class="abs" style="left:214px;top:194px;width:1648px;height:799px;background:#fff"></div><svg class="abs" style="left:0;top:0" width="1919" height="1048" viewBox="0 0 1919 1048" shape-rendering="crispEdges"><defs>
<linearGradient id="hd" x1="0" y1="0" x2="0" y2="1"><stop offset="0" stop-color="#c4d7f7"/><stop offset=".5" stop-color="#94b3eb"/><stop offset=".92" stop-color="#6b93dd"/><stop offset="1" stop-color="#5a86d6"/></linearGradient>
<linearGradient id="rh" x1="0" y1="0" x2="0" y2="1"><stop offset="0" stop-color="#c8dafa"/><stop offset=".5" stop-color="#9db9ee"/><stop offset="1" stop-color="#6389d6"/></linearGradient>
<linearGradient id="fb" x1="0" y1="0" x2="0" y2="1"><stop offset="0" stop-color="#f4f4f4"/><stop offset=".5" stop-color="#bdbdbd"/><stop offset="1" stop-color="#7c7c7c"/></linearGradient>
<clipPath id="edclip"><rect x="214" y="172" width="1648" height="821"/></clipPath>
</defs><g clip-path="url(#edclip)"><rect x="214" y="172.5" width="136" height="21.5" fill="#93b3e9" /><rect x="350" y="172.5" width="1512" height="21.5" fill="url(#hd)" /><path d="M457.5 172v22" fill="none" stroke="#7b7f8c" stroke-width="1" /><path d="M458.5 172v22" fill="none" stroke="#aac4f2" stroke-width="1" /><path d="M565.5 172v22" fill="none" stroke="#7b7f8c" stroke-width="1" /><path d="M566.5 172v22" fill="none" stroke="#aac4f2" stroke-width="1" /><path d="M673.5 172v22" fill="none" stroke="#7b7f8c" stroke-width="1" /><path d="M674.5 172v22" fill="none" stroke="#aac4f2" stroke-width="1" /><path d="M781.5 172v22" fill="none" stroke="#7b7f8c" stroke-width="1" /><path d="M782.5 172v22" fill="none" stroke="#aac4f2" stroke-width="1" /><path d="M889.5 172v22" fill="none" stroke="#7b7f8c" stroke-width="1" /><path d="M890.5 172v22" fill="none" stroke="#aac4f2" stroke-width="1" /><path d="M997.5 172v22" fill="none" stroke="#7b7f8c" stroke-width="1" /><path d="M998.5 172v22" fill="none" stroke="#aac4f2" stroke-width="1" /><path d="M1105.5 172v22" fill="none" stroke="#7b7f8c" stroke-width="1" /><path d="M1106.5 172v22" fill="none" stroke="#aac4f2" stroke-width="1" /><path d="M1213.5 172v22" fill="none" stroke="#7b7f8c" stroke-width="1" /><path d="M1214.5 172v22" fill="none" stroke="#aac4f2" stroke-width="1" /><path d="M1321.5 172v22" fill="none" stroke="#7b7f8c" stroke-width="1" /><path d="M1322.5 172v22" fill="none" stroke="#aac4f2" stroke-width="1" /><path d="M1429.5 172v22" fill="none" stroke="#7b7f8c" stroke-width="1" /><path d="M1430.5 172v22" fill="none" stroke="#aac4f2" stroke-width="1" /><path d="M1537.5 172v22" fill="none" stroke="#7b7f8c" stroke-width="1" /><path d="M1538.5 172v22" fill="none" stroke="#aac4f2" stroke-width="1" /><path d="M1645.5 172v22" fill="none" stroke="#7b7f8c" stroke-width="1" /><path d="M1646.5 172v22" fill="none" stroke="#aac4f2" stroke-width="1" /><path d="M1753.5 172v22" fill="none" stroke="#7b7f8c" stroke-width="1" /><path d="M1754.5 172v22" fill="none" stroke="#aac4f2" stroke-width="1" /><path d="M296.500 172v22" fill="none" stroke="#dfe8fa" stroke-width="1" stroke-dasharray="1 1"/><rect x="329.5" y="175.5" width="18" height="16" fill="url(#hd)" stroke="#55a4f8" stroke-width="1" /><path d="M335 182h6l-3 3.500z" fill="#000" /><rect x="214" y="194" width="28" height="118" fill="url(#rh)" /><path d="M214 194.5h28" fill="none" stroke="#7f9ad0" stroke-width="1" /><rect x="214" y="312" width="28" height="118" fill="url(#rh)" /><path d="M214 312.5h28" fill="none" stroke="#7f9ad0" stroke-width="1" /><rect x="214" y="430" width="28" height="118" fill="url(#rh)" /><path d="M214 430.5h28" fill="none" stroke="#7f9ad0" stroke-width="1" /><rect x="214" y="548" width="28" height="118" fill="url(#rh)" /><path d="M214 548.5h28" fill="none" stroke="#7f9ad0" stroke-width="1" /><rect x="214" y="666" width="28" height="118" fill="url(#rh)" /><path d="M214 666.5h28" fill="none" stroke="#7f9ad0" stroke-width="1" /><rect x="214" y="784" width="28" height="118" fill="url(#rh)" /><path d="M214 784.5h28" fill="none" stroke="#7f9ad0" stroke-width="1" /><rect x="214" y="902" width="28" height="118" fill="url(#rh)" /><path d="M214 902.5h28" fill="none" stroke="#7f9ad0" stroke-width="1" /><rect x="297" y="312" width="52" height="235" fill="#add8e6" /><path d="M457.5 194v800" fill="none" stroke="#c8c8c8" stroke-width="1" stroke-dasharray="1 1"/><path d="M565.5 194v800" fill="none" stroke="#c8c8c8" stroke-width="1" stroke-dasharray="1 1"/><path d="M673.5 194v800" fill="none" stroke="#c8c8c8" stroke-width="1" stroke-dasharray="1 1"/><path d="M781.5 194v800" fill="none" stroke="#c8c8c8" stroke-width="1" stroke-dasharray="1 1"/><path d="M889.5 194v800" fill="none" stroke="#c8c8c8" stroke-width="1" stroke-dasharray="1 1"/><path d="M997.5 194v800" fill="none" stroke="#c8c8c8" stroke-width="1" stroke-dasharray="1 1"/><path d="M1105.5 194v800" fill="none" stroke="#c8c8c8" stroke-width="1" stroke-dasharray="1 1"/><path d="M1213.5 194v800" fill="none" stroke="#c8c8c8" stroke-width="1" stroke-dasharray="1 1"/><path d="M1321.5 194v800" fill="none" stroke="#c8c8c8" stroke-width="1" stroke-dasharray="1 1"/><path d="M1429.5 194v800" fill="none" stroke="#c8c8c8" stroke-width="1" stroke-dasharray="1 1"/><path d="M1537.5 194v800" fill="none" stroke="#c8c8c8" stroke-width="1" stroke-dasharray="1 1"/><path d="M1645.5 194v800" fill="none" stroke="#c8c8c8" stroke-width="1" stroke-dasharray="1 1"/><path d="M1753.5 194v800" fill="none" stroke="#c8c8c8" stroke-width="1" stroke-dasharray="1 1"/><path d="M296.500 194v800" fill="none" stroke="#c8c8c8" stroke-width="1" stroke-dasharray="1 1"/><path d="M1861.500 194v800" fill="none" stroke="#c8c8c8" stroke-width="1" stroke-dasharray="1 1"/><path d="M243 311.5h1619" fill="none" stroke="#c8c8c8" stroke-width="1" stroke-dasharray="1 1"/><path d="M243 429.5h1619" fill="none" stroke="#c8c8c8" stroke-width="1" stroke-dasharray="1 1"/><path d="M243 547.5h1619" fill="none" stroke="#c8c8c8" stroke-width="1" stroke-dasharray="1 1"/><path d="M243 665.5h1619" fill="none" stroke="#c8c8c8" stroke-width="1" stroke-dasharray="1 1"/><path d="M243 783.5h1619" fill="none" stroke="#c8c8c8" stroke-width="1" stroke-dasharray="1 1"/><path d="M243 901.5h1619" fill="none" stroke="#c8c8c8" stroke-width="1" stroke-dasharray="1 1"/><rect x="297" y="549" width="51" height="40" fill="#add8e6" stroke="#10108a" stroke-width="2" /><rect x="350" y="194" width="1" height="800" fill="#000" /><rect x="351" y="220" width="42" height="1" fill="#000" /><rect x="396" y="210" width="15" height="21" fill="#0000ff" /><rect x="393" y="210" width="1" height="21" fill="#000" /><rect x="413" y="210" width="1" height="21" fill="#000" /><rect x="403" y="213" width="1" height="18" fill="#000" /><path d="M403.5 210L414 220.5L409.5 220.5L403.5 214.5L397.5 220.5L393 220.5z" fill="#000" shape-rendering="auto"/><rect x="414" y="220" width="87" height="1" fill="#000" /><rect x="501" y="210" width="1" height="21" fill="#000" /><rect x="521" y="210" width="1" height="21" fill="#000" /><path d="M496 230.5L527 210" stroke="#000" stroke-width="1" shape-rendering="auto"/><rect x="522" y="220" width="87" height="1" fill="#000" /><rect x="612" y="210" width="15" height="21" fill="#0000ff" /><rect x="609" y="210" width="1" height="21" fill="#000" /><rect x="629" y="210" width="1" height="21" fill="#000" /><path d="M604 230.5L635 210" stroke="#000" stroke-width="1" shape-rendering="auto"/><rect x="630" y="220" width="87" height="1" fill="#000" /><rect x="720" y="210" width="15" height="21" fill="#0000ff" /><rect x="717" y="210" width="1" height="21" fill="#000" /><rect x="737" y="210" width="1" height="21" fill="#000" /><path d="M712 230.5L743 210" stroke="#000" stroke-width="1" shape-rendering="auto"/><rect x="738" y="220" width="87" height="1" fill="#000" /><rect x="828" y="210" width="15" height="21" fill="#0000ff" /><rect x="825" y="210" width="1" height="21" fill="#000" /><rect x="845" y="210" width="1" height="21" fill="#000" /><path d="M820 230.5L851 210" stroke="#000" stroke-width="1" shape-rendering="auto"/><rect x="846" y="220" width="87" height="1" fill="#000" /><rect x="933" y="210" width="1" height="21" fill="#000" /><rect x="953" y="210" width="1" height="21" fill="#000" /><path d="M928 230.5L959 210" stroke="#000" stroke-width="1" shape-rendering="auto"/><rect x="954" y="220" width="87" height="1" fill="#000" /><rect x="1044" y="210" width="15" height="21" fill="#0000ff" /><rect x="1041" y="210" width="1" height="21" fill="#000" /><rect x="1061" y="210" width="1" height="21" fill="#000" /><path d="M1036 230.5L1067 210" stroke="#000" stroke-width="1" shape-rendering="auto"/><rect x="1062" y="220" width="585" height="1" fill="#000" /><rect x="351" y="338" width="42" height="1" fill="#000" /><rect x="396" y="328" width="15" height="21" fill="#0000ff" /><rect x="393" y="328" width="1" height="21" fill="#000" /><rect x="413" y="328" width="1" height="21" fill="#000" /><rect x="414" y="338" width="87" height="1" fill="#000" /><rect x="504" y="328" width="15" height="21" fill="#0000ff" /><rect x="501" y="328" width="1" height="21" fill="#000" /><rect x="521" y="328" width="1" height="21" fill="#000" /><path d="M496 348.5L527 328" stroke="#000" stroke-width="1" shape-rendering="auto"/><rect x="522" y="338" width="87" height="1" fill="#000" /><rect x="612" y="328" width="15" height="21" fill="#0000ff" /><rect x="609" y="328" width="1" height="21" fill="#000" /><rect x="629" y="328" width="1" height="21" fill="#000" /><path d="M604 348.5L635 328" stroke="#000" stroke-width="1" shape-rendering="auto"/><rect x="630" y="338" width="87" height="1" fill="#000" /><rect x="720" y="328" width="15" height="21" fill="#0000ff" /><rect x="717" y="328" width="1" height="21" fill="#000" /><rect x="737" y="328" width="1" height="21" fill="#000" /><path d="M712 348.5L743 328" stroke="#000" stroke-width="1" shape-rendering="auto"/><rect x="738" y="338" width="368" height="1" fill="#000" /><rect x="782" y="338" width="1" height="119" fill="#000" /><rect x="782" y="456" width="43" height="1" fill="#000" /><rect x="825" y="446" width="1" height="21" fill="#000" /><rect x="845" y="446" width="1" height="21" fill="#000" /><rect x="846" y="456" width="801" height="1" fill="#000" /><rect x="890" y="456" width="1" height="354" fill="#000" /><rect x="351" y="574" width="1296" height="1" fill="#000" /><rect x="351" y="692" width="755" height="1" fill="#000" /><rect x="458" y="692" width="1" height="118" fill="#000" /><rect x="458" y="810" width="43" height="1" fill="#000" /><rect x="501" y="800" width="1" height="21" fill="#000" /><rect x="521" y="800" width="1" height="21" fill="#000" /><rect x="522" y="810" width="1125" height="1" fill="#000" /><rect x="566" y="810" width="1" height="118" fill="#000" /><rect x="566" y="928" width="1081" height="1" fill="#000" /><rect x="1648" y="211" width="105" height="96" fill="url(#fb)" /><rect x="1648" y="210" width="211" height="98" fill="none" stroke="#0000ff" stroke-width="4" /><rect x="1753" y="208" width="1" height="102" fill="#0000ff" /><rect x="1648" y="447" width="105" height="96" fill="url(#fb)" /><rect x="1647.5" y="446.5" width="213" height="97" fill="none" stroke="#000" stroke-width="1" /><rect x="1753" y="447" width="1" height="96" fill="#fff" /><rect x="1648" y="565" width="105" height="96" fill="url(#fb)" /><rect x="1648" y="564" width="211" height="98" fill="none" stroke="#0000ff" stroke-width="4" /><rect x="1753" y="562" width="1" height="102" fill="#0000ff" /><rect x="1648" y="801" width="105" height="96" fill="url(#fb)" /><rect x="1648" y="800" width="211" height="98" fill="none" stroke="#0000ff" stroke-width="4" /><rect x="1753" y="798" width="1" height="102" fill="#0000ff" /><rect x="1648" y="919" width="105" height="96" fill="url(#fb)" /><rect x="1648" y="918" width="211" height="98" fill="none" stroke="#0000ff" stroke-width="4" /><rect x="1753" y="916" width="1" height="102" fill="#0000ff" /><rect x="1106.5" y="328.5" width="754" height="97" fill="#fff" stroke="#000" stroke-width="1" /><rect x="1107" y="329" width="106" height="96" fill="url(#fb)" /><rect x="1106.5" y="682.5" width="754" height="97" fill="#fff" stroke="#000" stroke-width="1" /><rect x="1107" y="683" width="106" height="96" fill="url(#fb)" /><rect x="1801" y="344" width="13" height="13" fill="#0000ff" /><rect x="1801.5" y="698.5" width="12" height="12" fill="#fff" stroke="#0000ff" stroke-width="1" /></g><g shape-rendering="auto" clip-path="url(#edclip)"><text x="403.5" y="188" font-size="15" fill="#000" text-anchor="middle" font-family="Liberation Sans,sans-serif">1</text><text x="511.5" y="188" font-size="15" fill="#000" text-anchor="middle" font-family="Liberation Sans,sans-serif">2</text><text x="619.5" y="188" font-size="15" fill="#000" text-anchor="middle" font-family="Liberation Sans,sans-serif">3</text><text x="727.5" y="188" font-size="15" fill="#000" text-anchor="middle" font-family="Liberation Sans,sans-serif">4</text><text x="835.5" y="188" font-size="15" fill="#000" text-anchor="middle" font-family="Liberation Sans,sans-serif">5</text><text x="943.5" y="188" font-size="15" fill="#000" text-anchor="middle" font-family="Liberation Sans,sans-serif">6</text><text x="1051.5" y="188" font-size="15" fill="#000" text-anchor="middle" font-family="Liberation Sans,sans-serif">7</text><text x="1159.5" y="188" font-size="15" fill="#000" text-anchor="middle" font-family="Liberation Sans,sans-serif">8</text><text x="1267.5" y="188" font-size="15" fill="#000" text-anchor="middle" font-family="Liberation Sans,sans-serif">9</text><text x="1375.5" y="188" font-size="15" fill="#000" text-anchor="middle" font-family="Liberation Sans,sans-serif">10</text><text x="1483.5" y="188" font-size="15" fill="#000" text-anchor="middle" font-family="Liberation Sans,sans-serif">11</text><text x="1591.5" y="188" font-size="15" fill="#000" text-anchor="middle" font-family="Liberation Sans,sans-serif">12</text><text x="1699.5" y="188" font-size="15" fill="#000" text-anchor="middle" font-family="Liberation Sans,sans-serif">13</text><text x="1807.5" y="188" font-size="15" fill="#000" text-anchor="middle" font-family="Liberation Sans,sans-serif">14</text><text x="217" y="189" font-size="16" fill="#000" font-family="Liberation Sans,Noto Sans CJK SC,sans-serif" letter-spacing=".6">监视写入</text><text x="217" y="257.5" font-size="15" fill="#000" font-family="Liberation Sans,sans-serif">4</text><text x="217" y="375.5" font-size="15" fill="#000" font-family="Liberation Sans,sans-serif">5</text><text x="217" y="493.5" font-size="15" fill="#000" font-family="Liberation Sans,sans-serif">6</text><text x="217" y="611.5" font-size="15" fill="#000" font-family="Liberation Sans,sans-serif">7</text><text x="217" y="729.5" font-size="15" fill="#000" font-family="Liberation Sans,sans-serif">8</text><text x="217" y="847.5" font-size="15" fill="#000" font-family="Liberation Sans,sans-serif">9</text><text x="217" y="965.5" font-size="15" fill="#000" font-family="Liberation Sans,sans-serif">10</text><text x="347" y="256.5" font-size="12.7" fill="#202020" text-anchor="end" font-family="Liberation Sans,sans-serif" letter-spacing=".25">(18)</text><text x="347" y="374.5" font-size="12.7" fill="#202020" text-anchor="end" font-family="Liberation Sans,sans-serif" letter-spacing=".25">(36)</text><text x="403.5" y="205.1" font-size="12.7" fill="#404040" text-anchor="middle" font-family="Liberation Sans,sans-serif" letter-spacing=".25">SM412</text><text x="511.5" y="205.1" font-size="12.7" fill="#404040" text-anchor="middle" font-family="Liberation Sans,sans-serif" letter-spacing=".25">M4</text><text x="619.5" y="205.1" font-size="12.7" fill="#404040" text-anchor="middle" font-family="Liberation Sans,sans-serif" letter-spacing=".25">M5</text><text x="727.5" y="205.1" font-size="12.7" fill="#404040" text-anchor="middle" font-family="Liberation Sans,sans-serif" letter-spacing=".25">M60</text><text x="835.5" y="205.1" font-size="12.7" fill="#404040" text-anchor="middle" font-family="Liberation Sans,sans-serif" letter-spacing=".25">M61</text><text x="943.5" y="205.1" font-size="12.7" fill="#404040" text-anchor="middle" font-family="Liberation Sans,sans-serif" letter-spacing=".25">M80</text><text x="1051.5" y="205.1" font-size="12.7" fill="#404040" text-anchor="middle" font-family="Liberation Sans,sans-serif" letter-spacing=".25">M81</text><text x="403.5" y="323.1" font-size="12.7" fill="#404040" text-anchor="middle" font-family="Liberation Sans,sans-serif" letter-spacing=".25">M4</text><text x="511.5" y="323.1" font-size="12.7" fill="#404040" text-anchor="middle" font-family="Liberation Sans,sans-serif" letter-spacing=".25">M5</text><text x="619.5" y="323.1" font-size="12.7" fill="#404040" text-anchor="middle" font-family="Liberation Sans,sans-serif" letter-spacing=".25">M81</text><text x="727.5" y="323.1" font-size="12.7" fill="#404040" text-anchor="middle" font-family="Liberation Sans,sans-serif" letter-spacing=".25">M60</text><text x="835.5" y="441.1" font-size="12.7" fill="#404040" text-anchor="middle" font-family="Liberation Sans,sans-serif" letter-spacing=".25">M81</text><text class="cm" x="460" y="260.5">频率读取</text><text class="cm" x="568" y="260.5"><tspan font-family="Liberation Sans,sans-serif" font-size="13" letter-spacing="-.3">HMI</tspan><tspan dx="1.5">频率写入</tspan></text><text class="cm" x="676" y="260.5">写入通信执行</text><text class="cm" x="676" y="275.5">状态输出</text><text class="cm" x="784" y="260.5">写入通信正常</text><text class="cm" x="784" y="275.5">结束</text><text class="cm" x="892" y="260.5">读出通信执行</text><text class="cm" x="892" y="275.5">状态输出</text><text class="cm" x="1000" y="260.5">读出通信正常</text><text class="cm" x="1000" y="275.5">结束</text><text class="cm" x="352" y="378.5">频率读取</text><text class="cm" x="460" y="378.5"><tspan font-family="Liberation Sans,sans-serif" font-size="13" letter-spacing="-.3">HMI</tspan><tspan dx="1.5">频率写入</tspan></text><text class="cm" x="568" y="378.5">读出通信正常</text><text class="cm" x="568" y="393.5">结束</text><text class="cm" x="676" y="378.5">写入通信执行</text><text class="cm" x="676" y="393.5">状态输出</text><text class="cm" x="784" y="496.5">读出通信正常</text><text class="cm" x="784" y="511.5">结束</text><text class="cm" x="460" y="850.5">写入通信正常</text><text class="cm" x="460" y="865.5">结束</text><text x="1700" y="255.5" font-size="12.7" fill="#101010" text-anchor="middle" font-family="Liberation Sans,sans-serif" letter-spacing=".25">SET</text><text x="1700" y="491.5" font-size="12.7" fill="#101010" text-anchor="middle" font-family="Liberation Sans,sans-serif" letter-spacing=".25">RST</text><text x="1700" y="609.5" font-size="12.7" fill="#101010" text-anchor="middle" font-family="Liberation Sans,sans-serif" letter-spacing=".25">RST</text><text x="1700" y="845.5" font-size="12.7" fill="#101010" text-anchor="middle" font-family="Liberation Sans,sans-serif" letter-spacing=".25">RST</text><text x="1700" y="963.5" font-size="12.7" fill="#101010" text-anchor="middle" font-family="Liberation Sans,sans-serif" letter-spacing=".25">RST</text><text x="1159" y="373.5" font-size="12.7" fill="#101010" text-anchor="middle" font-family="Liberation Sans,sans-serif" letter-spacing=".25">ADPRW</text><text x="1807.5" y="222.8" font-size="12.7" fill="#404040" text-anchor="middle" font-family="Liberation Sans,sans-serif" letter-spacing=".25">M4</text><text class="cm" x="1756" y="241">频率读取</text><text x="1807.5" y="458.8" font-size="12.7" fill="#404040" text-anchor="middle" font-family="Liberation Sans,sans-serif" letter-spacing=".25">M4</text><text class="cm" x="1756" y="477">频率读取</text><text x="1807.5" y="576.8" font-size="12.7" fill="#404040" text-anchor="middle" font-family="Liberation Sans,sans-serif" letter-spacing=".25">M81</text><text class="cm" x="1756" y="595">读出通信正常</text><text class="cm" x="1756" y="610">结束</text><text x="1807.5" y="812.8" font-size="12.7" fill="#404040" text-anchor="middle" font-family="Liberation Sans,sans-serif" letter-spacing=".25">M5</text><text class="cm" x="1756" y="831"><tspan font-family="Liberation Sans,sans-serif" font-size="13" letter-spacing="-.3">HMI</tspan><tspan dx="1.5">频率写入</tspan></text><text x="1807.5" y="930.8" font-size="12.7" fill="#404040" text-anchor="middle" font-family="Liberation Sans,sans-serif" letter-spacing=".25">M61</text><text class="cm" x="1756" y="949">写入通信正常</text><text class="cm" x="1756" y="964">结束</text><text x="1267.5" y="340.8" font-size="12.7" fill="#404040" text-anchor="middle" font-family="Liberation Sans,sans-serif" letter-spacing=".25">H1</text><text x="1375.5" y="340.8" font-size="12.7" fill="#404040" text-anchor="middle" font-family="Liberation Sans,sans-serif" letter-spacing=".25">H3</text><text x="1483.5" y="340.8" font-size="12.7" fill="#404040" text-anchor="middle" font-family="Liberation Sans,sans-serif" letter-spacing=".25">H2103</text><text x="1591.5" y="340.8" font-size="12.7" fill="#404040" text-anchor="middle" font-family="Liberation Sans,sans-serif" letter-spacing=".25">K8</text><text x="1699.5" y="340.8" font-size="12.7" fill="#404040" text-anchor="middle" font-family="Liberation Sans,sans-serif" letter-spacing=".25">D0</text><text x="1807.5" y="340.8" font-size="12.7" fill="#404040" text-anchor="middle" font-family="Liberation Sans,sans-serif" letter-spacing=".25">M80</text><text x="1483.5" y="694.8" font-size="12.7" fill="#404040" text-anchor="middle" font-family="Liberation Sans,sans-serif" letter-spacing=".25">H2001</text><text x="1591.5" y="694.8" font-size="12.7" fill="#404040" text-anchor="middle" font-family="Liberation Sans,sans-serif" letter-spacing=".25">K1</text><text x="1699.5" y="694.8" font-size="12.7" fill="#404040" text-anchor="middle" font-family="Liberation Sans,sans-serif" letter-spacing=".25">D168</text><text x="1807.5" y="694.8" font-size="12.7" fill="#404040" text-anchor="middle" font-family="Liberation Sans,sans-serif" letter-spacing=".25">M60</text><text x="1699.5" y="354.6" font-size="12.7" fill="#2828f0" text-anchor="middle" font-family="Liberation Sans,sans-serif" letter-spacing=".25">5678</text><text x="1699.5" y="708.6" font-size="12.7" fill="#2828f0" text-anchor="middle" font-family="Liberation Sans,sans-serif" letter-spacing=".25">5678</text><text class="cm" x="1648" y="374.5">接收道地址Ｄ</text><text class="cm" x="1648" y="389.5">０－Ｄ７</text><text class="cm" x="1756" y="374.5">读出通信执行</text><text class="cm" x="1756" y="389.5">状态输出</text><text class="cm" x="1648" y="728.5">要发送的字节</text><text class="cm" x="1756" y="728.5">写入通信执行</text><text class="cm" x="1756" y="743.5">状态输出</text></g></svg><div class="abs" style="left:1869px;top:181px;width:19px;height:812px;background:linear-gradient(90deg,#e4e4e4,#f2f2f2 40%,#eaeaea)"></div><div class="abs" style="left:1869px;top:173px;width:19px;height:6px;background:linear-gradient(90deg,#e8f4fb,#a8d4ea 60%,#cfe8f5);border:1px solid #4a86b8;border-radius:2px"></div><div class="abs" style="left:1869px;top:265px;width:19px;height:128px;background:linear-gradient(90deg,#f4f4f4,#dcdcdc 50%,#c8c8c8);border:1px solid #979797;border-radius:3px"></div><svg class="abs" style="left:1869px;top:181px" width="19" height="812" viewBox="0 0 19 812"><path d="M5 13h9l-4.500-5z" fill="#444"/><path d="M5 798h9l-4.500 5z" fill="#444"/><path d="M5.500 142.500h8M5.500 145.500h8M5.500 148.500h8" stroke="#555"/><path d="M5.500 143.500h8M5.500 146.500h8M5.500 149.500h8" stroke="#fff"/></svg><div class="abs" style="left:214px;top:994px;width:1648px;height:20px;background:linear-gradient(#f2f2f2,#e6e6e6)"></div><svg class="abs" style="left:214px;top:994px" width="1660" height="22" viewBox="0 0 1660 22"><path d="M12 5v10l-5-5z" fill="#666"/><path d="M1633 5v10l5-5z" fill="#666"/><rect x="1647.500" y="1.500" width="6" height="17" rx="1.500" fill="#bfe0f2" stroke="#4a86b8"/></svg><div class="abs" style="left:1894px;top:167px;width:25px;height:854px;background:#2c3c5e"></div><div class="abs" style="left:1898px;top:141px;width:21px;height:86px;background:#4a5b83;border-radius:4px 0 0 4px"></div><svg class="abs" style="left:1898px;top:143px" width="21" height="22" viewBox="0 0 21 22"><path d="M6 2v18M10.500 2v18M15 2v18" stroke="#000" stroke-width="2"/><rect x="4.500" y="5.500" width="12" height="11" fill="#aaa" stroke="#000" stroke-width="1.500"/></svg><div class="t" style="left:1917px;top:165px;font-size:15px;color:#fff;transform-origin:0 0;transform:rotate(90deg)">部件选择</div>
<!-- status -->
<div class="abs" style="left:0;top:1021px;width:1919px;height:27px;background:#2c3a5a"></div><div class="abs" style="left:1447px;top:1024px;width:1px;height:21px;background:#c8d0e0"></div><div class="abs" style="left:1601px;top:1024px;width:1px;height:21px;background:#c8d0e0"></div><div class="abs" style="left:1765px;top:1024px;width:1px;height:21px;background:#c8d0e0"></div><div class="abs" style="left:1839px;top:1024px;width:1px;height:21px;background:#c8d0e0"></div><div class="abs" style="left:1879px;top:1024px;width:1px;height:21px;background:#c8d0e0"></div><div class="t st" style="left:1453px;top:1028px;color:#fff">本站</div><div class="t st" style="left:1607px;top:1028px;color:#fff"><span style="letter-spacing:.6px">61/298</span>步</div><div class="t st" style="left:1771px;top:1028px;color:#fff">改写</div><div class="t st" style="left:1845px;top:1028px;color:#6b7690">大写</div><div class="t st" style="left:1885px;top:1028px;color:#fff">数字</div><div class="abs" style="left:0;top:1045px;width:1919px;height:3px;background:#eef1f5;border-top:1.500px solid #1e2a40"></div><div class="abs" style="left:16px;top:1038px;width:34px;height:30px;border-radius:50%;background:radial-gradient(circle at 50% 50%,#f06020 0,#c03a10 35%,#5f8fc0 55%,#a8c8e8 68%,#4a6a90 72%)"></div><div class="abs" style="left:1910px;top:875px;width:14px;height:58px;background:#1d2939;border:1px solid #44546a;border-radius:3px"></div><div class="abs" style="left:1914px;top:881px;width:4px;height:33px;background:repeating-linear-gradient(#2e3b4d 0,#2e3b4d 1px,#1d2939 1px,#1d2939 2px)"></div><div class="abs" style="left:1914px;top:915px;width:4px;height:12px;background:repeating-linear-gradient(#3fc09a 0,#3fc09a 1.500px,#1d2939 1.500px,#1d2939 2.400px)"></div>
<!-- overlay -->
<div class="abs" style="left:277px;top:562px;width:690px;height:242px;background:#fff"></div><svg class="abs" style="left:277px;top:562px" width="690" height="242" viewBox="277 562 690 242" shape-rendering="crispEdges"><rect x="282" y="566.2" width="684" height="1.600" fill="#8c8c8c"/><rect x="282" y="591.9" width="684" height="1.600" fill="#8c8c8c"/><rect x="282" y="617.8" width="684" height="1.600" fill="#8c8c8c"/><rect x="282" y="643.5" width="684" height="1.600" fill="#8c8c8c"/><rect x="282" y="669.2" width="684" height="1.600" fill="#8c8c8c"/><rect x="282" y="694.9" width="684" height="1.600" fill="#8c8c8c"/><rect x="282" y="720.6" width="684" height="1.600" fill="#8c8c8c"/><rect x="282" y="746.2" width="684" height="1.600" fill="#8c8c8c"/><rect x="282" y="772" width="684" height="1.600" fill="#8c8c8c"/><rect x="282" y="797.8" width="684" height="1.600" fill="#8c8c8c"/><rect x="282.15" y="562" width="1.300" height="237.400" fill="#8c8c8c"/><rect x="385.85" y="562" width="1.300" height="237.400" fill="#8c8c8c"/><rect x="964.65" y="562" width="1.300" height="237.400" fill="#8c8c8c"/><rect x="490" y="562" width="1.500" height="5" fill="#8c8c8c"/><path d="M494 563.500h25" stroke="#bbb" stroke-dasharray="2 3"/></svg><div class="t ov1" style="left:283px;width:104px;top:570.35px">2102H</div><div class="t ov2" style="left:390px;top:570.85px">频率指令（<b>F</b>）</div><div class="t ov1" style="left:283px;width:104px;top:596.15px">2103H</div><div class="t ov2" style="left:390px;top:596.65px">输出频率（<b>H</b>）</div><div class="t ov1" style="left:283px;width:104px;top:621.95px">2104H</div><div class="t ov2" style="left:390px;top:622.45px">输出电流（<b>AXX.X</b>）</div><div class="t ov1" style="left:283px;width:104px;top:647.65px">2105H</div><div class="t ov2" style="left:390px;top:648.15px">保留</div><div class="t ov1" style="left:283px;width:104px;top:673.35px">2106H</div><div class="t ov2" style="left:390px;top:673.85px">显示 <b>PID</b> 回授输入端子之仿真讯号值（<b>b</b>）</div><div class="t ov1" style="left:283px;width:104px;top:699.05px">2107H</div><div class="t ov2" style="left:390px;top:699.55px">保留</div><div class="t ov1" style="left:283px;width:104px;top:724.7px">2108H</div><div class="t ov2" style="left:390px;top:725.2px"><b>DC-BUS</b> 电压（<b>uXXX.X</b>）</div><div class="t ov1" style="left:283px;width:104px;top:750.4px">2109H</div><div class="t ov2" style="left:390px;top:750.9px">输出电压（<b>EXXX.X</b>）</div><div class="t ov1" style="left:283px;width:104px;top:776.2px">210AH</div><div class="t ov2" style="left:390px;top:776.7px"><b>IGBT</b> 温度显示（℃）</div>
<!-- watch -->
<div class="abs" style="left:966px;top:457px;width:449px;height:600px;background:#cfe0f5;border:1px solid #3c4656"></div><div class="abs" style="left:967px;top:458px;width:447px;height:29px;background:linear-gradient(90deg,#e4eefa,#cfe2f7 40%,#d6e6f8 100%)"></div><div class="t" style="left:975px;top:465px;font-size:15px;color:#000;letter-spacing:.2px">监看1【监看中】</div><div class="abs" style="left:1387px;top:463px;width:21px;height:21px;border:1px solid #7a3a30;border-radius:3px;background:linear-gradient(#eab8a8 0,#dc8a78 45%,#c4452c 50%,#d8795c 100%);box-shadow:inset 0 0 0 1px rgba(255,255,255,.5)"></div><svg class="abs" style="left:1387px;top:463px" width="21" height="21" viewBox="0 0 21 21"><path d="M6 6l9 9M15 6l-9 9" stroke="#5a3028" stroke-width="4.500"/><path d="M6 6l9 9M15 6l-9 9" stroke="#fff" stroke-width="2.600"/></svg><div class="abs" style="left:973px;top:486px;width:435px;height:570px;background:#fff;border:1px solid #2a2a2a"></div><div class="abs" style="left:975px;top:488px;width:431px;height:31px;background:linear-gradient(#c0cadd,#b7c2d6);border-radius:4px"></div><div class="abs" style="left:976px;top:520px;width:428px;height:530px;background:#fff;border-left:2px solid #8a8a8a;border-top:2px solid #6a6a6a;border-right:2px solid #b0b0b0"></div><svg class="abs" style="left:975px;top:488px" width="431" height="31" viewBox="0 0 431 31">
<path d="M55.500 4v23M114.500 4v23M233.500 4v23" stroke="#8e9bb4"/>
<rect x="13" y="6" width="5" height="18" fill="#0000ff"/><path d="M7 15h5M20 15h5" stroke="#000" stroke-width="1.600"/><path d="M11.500 6v18M19.500 6v18" stroke="#000" stroke-width="2.600"/>
<path d="M62 15h5M77 15h5" stroke="#000" stroke-width="1.600"/><path d="M67.500 6v18M76.500 6v18" stroke="#000" stroke-width="2.600"/>
<path d="M121 15h5M135 15h5" stroke="#000" stroke-width="1.600"/><path d="M126.500 6v18M134.500 6v18" stroke="#000" stroke-width="2.600"/><path d="M124 23l12-17" stroke="#000" stroke-width="2"/>
<path d="M242.500 5.500h9l4 4v16h-13z" fill="#eef2fb" stroke="#8a94c8"/><path d="M245 13c1-4 7-4 8 0h2l-3 3-3-3h2c-1-2-3-2-4 0zM253 18c-1 4-7 4-8 0h-2l3-3 3 3h-2c1 2 3 2 4 0z" fill="#18a030"/>
</svg><div class="t" style="left:1001px;top:496px;font-size:15px;color:#1a2438;letter-spacing:0.3px">ON</div><div class="t" style="left:1056px;top:496px;font-size:15px;color:#1a2438;letter-spacing:-0.8px">OFF</div><div class="t" style="left:1115px;top:496px;font-size:15px;color:#1a2438;letter-spacing:0.3px">ON/OFF反转</div><div class="t" style="left:1233px;top:496px;font-size:15px;color:#1a2438;letter-spacing:0.3px">更新</div><div class="abs" style="left:978px;top:522px;width:424px;height:27px;background:linear-gradient(#f3f8ff,#dbe8f9);border-bottom:1px solid #5a8ad6"></div><div class="abs" style="left:1089px;top:524px;width:1px;height:22px;background:#8ab0e8"></div><div class="abs" style="left:1200px;top:524px;width:1px;height:22px;background:#8ab0e8"></div><div class="abs" style="left:1285px;top:524px;width:1px;height:22px;background:#8ab0e8"></div><div class="t" style="left:984px;top:528px;font-size:15px;letter-spacing:.1px">名称</div><div class="t" style="left:1093px;top:528px;font-size:15px;letter-spacing:.1px">当前值</div><div class="t" style="left:1204px;top:528px;font-size:15px;letter-spacing:.1px">显示格式</div><div class="t" style="left:1289px;top:528px;font-size:15px;letter-spacing:.1px">数据类型</div><div class="abs" style="left:978px;top:549px;width:424px;height:23px;background:#fff;border-bottom:1px solid #5f8fd8"></div><svg class="abs" style="left:1003px;top:551px" width="17" height="17" viewBox="0 0 17 17"><circle cx="7" cy="7" r="6.500" fill="#3a8ad8"/><path d="M3 4c2-2 5-2 6 0s-1 3-3 3-4-1-3-3z" fill="#4ab848"/><path d="M2 9c1 0 3 1 3 3" stroke="#4ab848" stroke-width="2" fill="none"/><rect x="6.500" y="6.500" width="8" height="10" fill="#f4f4f4" stroke="#555"/><path d="M8 9h5M8 11.500h5M8 14h3" stroke="#888"/><path d="M10 13l5-6" stroke="#3a9a28" stroke-width="2"/></svg><div class="t wt wl" style="left:1021px;top:552px">D168</div><div class="t wt wl" style="left:1092px;top:552px">5678</div><div class="t wt wm" style="left:1203px;top:552px">10进制数</div><div class="t wt wm" style="left:1288px;top:552px">字[有符号]</div><div class="abs" style="left:978px;top:572px;width:424px;height:23px;background:#efefef;border-bottom:1px solid #5f8fd8"></div><svg class="abs" style="left:1003px;top:574px" width="17" height="17" viewBox="0 0 17 17"><circle cx="7" cy="7" r="6.500" fill="#3a8ad8"/><path d="M3 4c2-2 5-2 6 0s-1 3-3 3-4-1-3-3z" fill="#4ab848"/><path d="M2 9c1 0 3 1 3 3" stroke="#4ab848" stroke-width="2" fill="none"/><rect x="6.500" y="6.500" width="8" height="10" fill="#f4f4f4" stroke="#555"/><path d="M8 9h5M8 11.500h5M8 14h3" stroke="#888"/><path d="M10 13l5-6" stroke="#3a9a28" stroke-width="2"/></svg><div class="t wt wl" style="left:1021px;top:575px">M5</div><div class="t wt wl" style="left:1092px;top:575px">FALSE</div><div class="t wt wm" style="left:1203px;top:575px">2进制数</div><div class="t wt wm" style="left:1288px;top:575px">位</div><div class="abs" style="left:978px;top:595px;width:424px;height:23px;background:#fff;border-bottom:1px solid #5f8fd8"></div><svg class="abs" style="left:1003px;top:597px" width="17" height="17" viewBox="0 0 17 17"><circle cx="7" cy="7" r="6.500" fill="#3a8ad8"/><path d="M3 4c2-2 5-2 6 0s-1 3-3 3-4-1-3-3z" fill="#4ab848"/><path d="M2 9c1 0 3 1 3 3" stroke="#4ab848" stroke-width="2" fill="none"/><rect x="6.500" y="6.500" width="8" height="10" fill="#f4f4f4" stroke="#555"/><path d="M8 9h5M8 11.500h5M8 14h3" stroke="#888"/><path d="M10 13l5-6" stroke="#3a9a28" stroke-width="2"/></svg><div class="t wt wl" style="left:1021px;top:598px">D0</div><div class="t wt wl" style="left:1092px;top:598px">5678</div><div class="t wt wm" style="left:1203px;top:598px">10进制数</div><div class="t wt wm" style="left:1288px;top:598px">字[有符号]</div><div class="abs" style="left:978px;top:618px;width:424px;height:23px;background:#e6eafc;border-bottom:1px solid #5f8fd8"></div><svg class="abs" style="left:1003px;top:620px" width="17" height="17" viewBox="0 0 17 17"><circle cx="7" cy="7" r="6.500" fill="#3a8ad8"/><path d="M3 4c2-2 5-2 6 0s-1 3-3 3-4-1-3-3z" fill="#4ab848"/><path d="M2 9c1 0 3 1 3 3" stroke="#4ab848" stroke-width="2" fill="none"/><rect x="6.500" y="6.500" width="8" height="10" fill="#f4f4f4" stroke="#555"/><path d="M8 9h5M8 11.500h5M8 14h3" stroke="#888"/><path d="M10 13l5-6" stroke="#3a9a28" stroke-width="2"/></svg><div class="t wt wl" style="left:1021px;top:621px">D1</div><div class="t wt wl" style="left:1092px;top:621px">0</div><div class="t wt wm" style="left:1203px;top:621px">10进制数</div><div class="t wt wm" style="left:1288px;top:621px">字[有符号]</div><div class="abs" style="left:978px;top:641px;width:424px;height:23px;background:#fff;border-bottom:1px solid #5f8fd8"></div><svg class="abs" style="left:1003px;top:643px" width="17" height="17" viewBox="0 0 17 17"><circle cx="7" cy="7" r="6.500" fill="#3a8ad8"/><path d="M3 4c2-2 5-2 6 0s-1 3-3 3-4-1-3-3z" fill="#4ab848"/><path d="M2 9c1 0 3 1 3 3" stroke="#4ab848" stroke-width="2" fill="none"/><rect x="6.500" y="6.500" width="8" height="10" fill="#f4f4f4" stroke="#555"/><path d="M8 9h5M8 11.500h5M8 14h3" stroke="#888"/><path d="M10 13l5-6" stroke="#3a9a28" stroke-width="2"/></svg><div class="t wt wl" style="left:1021px;top:644px">D2</div><div class="t wt wl" style="left:1092px;top:644px">0</div><div class="t wt wm" style="left:1203px;top:644px">10进制数</div><div class="t wt wm" style="left:1288px;top:644px">字[有符号]</div><div class="abs" style="left:978px;top:664px;width:424px;height:23px;background:#e6eafc;border-bottom:1px solid #5f8fd8"></div><svg class="abs" style="left:1003px;top:666px" width="17" height="17" viewBox="0 0 17 17"><circle cx="7" cy="7" r="6.500" fill="#3a8ad8"/><path d="M3 4c2-2 5-2 6 0s-1 3-3 3-4-1-3-3z" fill="#4ab848"/><path d="M2 9c1 0 3 1 3 3" stroke="#4ab848" stroke-width="2" fill="none"/><rect x="6.500" y="6.500" width="8" height="10" fill="#f4f4f4" stroke="#555"/><path d="M8 9h5M8 11.500h5M8 14h3" stroke="#888"/><path d="M10 13l5-6" stroke="#3a9a28" stroke-width="2"/></svg><div class="t wt wl" style="left:1021px;top:667px">D3</div><div class="t wt wl" style="left:1092px;top:667px">0</div><div class="t wt wm" style="left:1203px;top:667px">10进制数</div><div class="t wt wm" style="left:1288px;top:667px">字[有符号]</div><div class="abs" style="left:978px;top:687px;width:424px;height:23px;background:#fff;border-bottom:1px solid #5f8fd8"></div><svg class="abs" style="left:1003px;top:689px" width="17" height="17" viewBox="0 0 17 17"><circle cx="7" cy="7" r="6.500" fill="#3a8ad8"/><path d="M3 4c2-2 5-2 6 0s-1 3-3 3-4-1-3-3z" fill="#4ab848"/><path d="M2 9c1 0 3 1 3 3" stroke="#4ab848" stroke-width="2" fill="none"/><rect x="6.500" y="6.500" width="8" height="10" fill="#f4f4f4" stroke="#555"/><path d="M8 9h5M8 11.500h5M8 14h3" stroke="#888"/><path d="M10 13l5-6" stroke="#3a9a28" stroke-width="2"/></svg><div class="t wt wl" style="left:1021px;top:690px">D4</div><div class="t wt wl" style="left:1092px;top:690px">0</div><div class="t wt wm" style="left:1203px;top:690px">10进制数</div><div class="t wt wm" style="left:1288px;top:690px">字[有符号]</div><div class="abs" style="left:978px;top:710px;width:424px;height:23px;background:#e6eafc;border-bottom:1px solid #5f8fd8"></div><svg class="abs" style="left:1003px;top:712px" width="17" height="17" viewBox="0 0 17 17"><circle cx="7" cy="7" r="6.500" fill="#3a8ad8"/><path d="M3 4c2-2 5-2 6 0s-1 3-3 3-4-1-3-3z" fill="#4ab848"/><path d="M2 9c1 0 3 1 3 3" stroke="#4ab848" stroke-width="2" fill="none"/><rect x="6.500" y="6.500" width="8" height="10" fill="#f4f4f4" stroke="#555"/><path d="M8 9h5M8 11.500h5M8 14h3" stroke="#888"/><path d="M10 13l5-6" stroke="#3a9a28" stroke-width="2"/></svg><div class="t wt wl" style="left:1021px;top:713px">D5</div><div class="t wt wl" style="left:1092px;top:713px">3140</div><div class="t wt wm" style="left:1203px;top:713px">10进制数</div><div class="t wt wm" style="left:1288px;top:713px">字[有符号]</div><div class="abs" style="left:978px;top:733px;width:424px;height:23px;background:#fff;border-bottom:1px solid #5f8fd8"></div><svg class="abs" style="left:1003px;top:735px" width="17" height="17" viewBox="0 0 17 17"><circle cx="7" cy="7" r="6.500" fill="#3a8ad8"/><path d="M3 4c2-2 5-2 6 0s-1 3-3 3-4-1-3-3z" fill="#4ab848"/><path d="M2 9c1 0 3 1 3 3" stroke="#4ab848" stroke-width="2" fill="none"/><rect x="6.500" y="6.500" width="8" height="10" fill="#f4f4f4" stroke="#555"/><path d="M8 9h5M8 11.500h5M8 14h3" stroke="#888"/><path d="M10 13l5-6" stroke="#3a9a28" stroke-width="2"/></svg><div class="t wt wl" style="left:1021px;top:736px">D6</div><div class="t wt wl" style="left:1092px;top:736px">2084</div><div class="t wt wm" style="left:1203px;top:736px">10进制数</div><div class="t wt wm" style="left:1288px;top:736px">字[有符号]</div><div class="abs" style="left:978px;top:756px;width:424px;height:23px;background:#e6eafc;border-bottom:1px solid #5f8fd8"></div><svg class="abs" style="left:1003px;top:758px" width="17" height="17" viewBox="0 0 17 17"><circle cx="7" cy="7" r="6.500" fill="#3a8ad8"/><path d="M3 4c2-2 5-2 6 0s-1 3-3 3-4-1-3-3z" fill="#4ab848"/><path d="M2 9c1 0 3 1 3 3" stroke="#4ab848" stroke-width="2" fill="none"/><rect x="6.500" y="6.500" width="8" height="10" fill="#f4f4f4" stroke="#555"/><path d="M8 9h5M8 11.500h5M8 14h3" stroke="#888"/><path d="M10 13l5-6" stroke="#3a9a28" stroke-width="2"/></svg><div class="t wt wl" style="left:1021px;top:759px">D7</div><div class="t wt wl" style="left:1092px;top:759px">260</div><div class="t wt wm" style="left:1203px;top:759px">10进制数</div><div class="t wt wm" style="left:1288px;top:759px">字[有符号]</div><div class="abs" style="left:978px;top:779px;width:424px;height:20px;background:#fff;border-bottom:1px solid #5f8fd8"></div><div class="abs" style="left:1089px;top:549px;width:1px;height:250px;background:#5f8fd8"></div><div class="abs" style="left:1200px;top:549px;width:1px;height:250px;background:#5f8fd8"></div><div class="abs" style="left:1285px;top:549px;width:1px;height:250px;background:#5f8fd8"></div>
<!-- annot -->
<svg class="abs" style="left:0;top:0" width="1919" height="1048" viewBox="0 0 1919 1048"><rect x="1640.500" y="318.500" width="115" height="110" fill="none" stroke="#ea1c24" stroke-width="5"/><path d="M1641 427L1413 591" stroke="#ea1c24" stroke-width="5" fill="none"/><rect x="973.500" y="591.500" width="440" height="209" fill="none" stroke="#ea1c24" stroke-width="5"/><rect x="277.500" y="591.500" width="684.500" height="209.500" fill="none" stroke="#ea1c24" stroke-width="4.500"/><path d="M581 607.500H1002" stroke="#ea1c24" stroke-width="5.500" fill="none"/><rect x="544" y="599.500" width="38" height="15.500" fill="#ea1c24"/><path d="M506.500 607L546 594.500V619.500z" fill="#ea1c24"/><path d="M522 607L541 601V613z" fill="#fff"/></svg>
</body></html>
